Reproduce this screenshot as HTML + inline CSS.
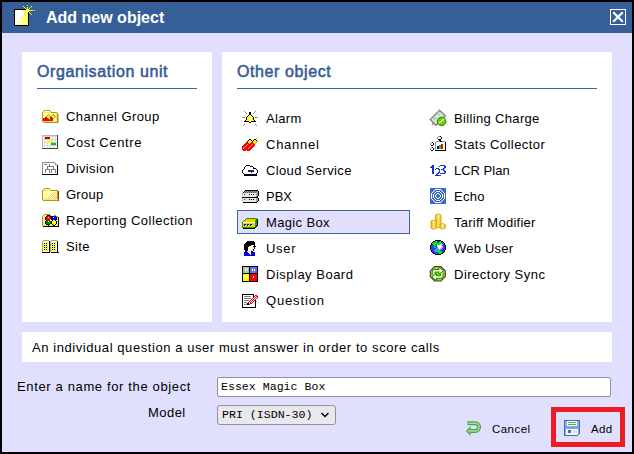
<!DOCTYPE html>
<html><head><meta charset="utf-8">
<style>
html,body{margin:0;padding:0;}
body{width:634px;height:454px;position:relative;overflow:hidden;background:#000;font-family:"Liberation Sans",sans-serif;}
.a{position:absolute;}
svg.a{display:block;}
#win{left:2px;top:2px;width:630px;height:450px;background:#E0E0FE;}
#title{left:2px;top:2px;width:630px;height:31px;background:#365F97;}
#ttext{left:46px;top:9px;font-weight:bold;font-size:16px;line-height:17px;color:#fff;white-space:nowrap;}
.panel{background:#fff;}
.hd{font-size:16px;line-height:17px;color:#355C95;-webkit-text-stroke:0.55px #355C95;letter-spacing:0.6px;white-space:nowrap;}
.ln{height:1px;background:#3D63A0;}
.sel{border:1px solid #3D63A0;background:#E0E0FE;}
.it{font-size:13px;line-height:15px;color:#000;white-space:nowrap;letter-spacing:0.4px;word-spacing:0;}
.btn{font-size:11.5px;line-height:15px;color:#000;white-space:nowrap;}
.inp{border:1px solid #8F8F9D;border-radius:2px;background:#fff;}
.selb{border:1px solid #8F8F9D;border-radius:3px;background:#E9E9ED;}
.mono{font-family:"Liberation Mono",monospace;font-size:11.6px;line-height:15px;white-space:nowrap;color:#000;}
</style></head>
<body>
<div id="win" class="a"></div>
<div id="title" class="a"></div>
<svg class="a" style="left:0;top:0" width="40" height="30" viewBox="0 0 40 30" shape-rendering="crispEdges"><rect x="14" y="9" width="15" height="17" fill="#000"/><rect x="15" y="10" width="13" height="15" fill="#fff"/><rect x="25" y="23" width="1" height="1" fill="#FFFF00"/><rect x="34" y="10" width="1" height="1" fill="#FFFF00"/><rect x="20" y="20" width="1" height="1" fill="#FFFF00"/><rect x="27" y="13" width="1" height="1" fill="#FFFF00"/><rect x="26" y="14" width="1" height="1" fill="#FFFF00"/><rect x="20" y="22" width="1" height="1" fill="#FFFF00"/><rect x="24" y="10" width="1" height="1" fill="#FFFF00"/><rect x="26" y="16" width="1" height="1" fill="#FFFF00"/><rect x="16" y="24" width="1" height="1" fill="#FFFF00"/><rect x="27" y="8" width="1" height="1" fill="#FFFF00"/><rect x="20" y="24" width="1" height="1" fill="#FFFF00"/><rect x="30" y="13" width="1" height="1" fill="#FFFF00"/><rect x="26" y="9" width="1" height="1" fill="#FFFF00"/><rect x="26" y="18" width="1" height="1" fill="#FFFF00"/><rect x="28" y="9" width="1" height="1" fill="#FFFF00"/><rect x="24" y="14" width="1" height="1" fill="#FFFF00"/><rect x="26" y="11" width="1" height="1" fill="#FFFF00"/><rect x="25" y="13" width="1" height="1" fill="#FFFF00"/><rect x="26" y="20" width="1" height="1" fill="#FFFF00"/><rect x="31" y="10" width="1" height="1" fill="#FFFF00"/><rect x="23" y="6" width="1" height="1" fill="#FFFF00"/><rect x="22" y="16" width="1" height="1" fill="#FFFF00"/><rect x="23" y="15" width="1" height="1" fill="#FFFF00"/><rect x="28" y="11" width="1" height="1" fill="#FFFF00"/><rect x="27" y="15" width="1" height="1" fill="#FFFF00"/><rect x="24" y="7" width="1" height="1" fill="#FFFF00"/><rect x="24" y="16" width="1" height="1" fill="#FFFF00"/><rect x="25" y="15" width="1" height="1" fill="#FFFF00"/><rect x="22" y="18" width="1" height="1" fill="#FFFF00"/><rect x="23" y="17" width="1" height="1" fill="#FFFF00"/><rect x="27" y="17" width="1" height="1" fill="#FFFF00"/><rect x="25" y="8" width="1" height="1" fill="#FFFF00"/><rect x="24" y="18" width="1" height="1" fill="#FFFF00"/><rect x="25" y="17" width="1" height="1" fill="#FFFF00"/><rect x="29" y="8" width="1" height="1" fill="#FFFF00"/><rect x="31" y="14" width="1" height="1" fill="#FFFF00"/><rect x="23" y="10" width="1" height="1" fill="#FFFF00"/><rect x="22" y="20" width="1" height="1" fill="#FFFF00"/><rect x="23" y="19" width="1" height="1" fill="#FFFF00"/><rect x="27" y="10" width="1" height="1" fill="#FFFF00"/><rect x="27" y="19" width="1" height="1" fill="#FFFF00"/><rect x="25" y="10" width="1" height="1" fill="#FFFF00"/><rect x="25" y="19" width="1" height="1" fill="#FFFF00"/><rect x="29" y="10" width="1" height="1" fill="#FFFF00"/><rect x="23" y="21" width="1" height="1" fill="#FFFF00"/><rect x="27" y="12" width="1" height="1" fill="#FFFF00"/><rect x="27" y="21" width="1" height="1" fill="#FFFF00"/><rect x="25" y="12" width="1" height="1" fill="#FFFF00"/><rect x="25" y="21" width="1" height="1" fill="#FFFF00"/><rect x="29" y="12" width="1" height="1" fill="#FFFF00"/><rect x="26" y="22" width="1" height="1" fill="#FFFF00"/><rect x="20" y="18" width="1" height="1" fill="#FFFF00"/><rect x="21" y="17" width="1" height="1" fill="#FFFF00"/><rect x="23" y="23" width="1" height="1" fill="#FFFF00"/><rect x="27" y="5" width="1" height="1" fill="#FFFF00"/><rect x="27" y="14" width="1" height="1" fill="#FFFF00"/><rect x="30" y="10" width="1" height="1" fill="#FFFF00"/><rect x="27" y="23" width="1" height="1" fill="#FFFF00"/><rect x="26" y="24" width="1" height="1" fill="#FFFF00"/><rect x="18" y="20" width="1" height="1" fill="#FFFF00"/><rect x="27" y="7" width="1" height="1" fill="#FFFF00"/><rect x="27" y="16" width="1" height="1" fill="#FFFF00"/><rect x="24" y="20" width="1" height="1" fill="#FFFF00"/><rect x="18" y="22" width="1" height="1" fill="#FFFF00"/><rect x="21" y="21" width="1" height="1" fill="#FFFF00"/><rect x="27" y="9" width="1" height="1" fill="#FFFF00"/><rect x="22" y="22" width="1" height="1" fill="#FFFF00"/><rect x="27" y="18" width="1" height="1" fill="#FFFF00"/><rect x="24" y="13" width="1" height="1" fill="#FFFF00"/><rect x="26" y="10" width="1" height="1" fill="#FFFF00"/><rect x="31" y="6" width="1" height="1" fill="#FFFF00"/><rect x="24" y="22" width="1" height="1" fill="#FFFF00"/><rect x="18" y="24" width="1" height="1" fill="#FFFF00"/><rect x="27" y="11" width="1" height="1" fill="#FFFF00"/><rect x="28" y="10" width="1" height="1" fill="#FFFF00"/><rect x="22" y="24" width="1" height="1" fill="#FFFF00"/><rect x="30" y="7" width="1" height="1" fill="#FFFF00"/><rect x="32" y="10" width="1" height="1" fill="#FFFF00"/><rect x="26" y="12" width="1" height="1" fill="#FFFF00"/><rect x="24" y="24" width="1" height="1" fill="#FFFF00"/><rect x="26" y="9" width="3" height="3" fill="#FFFF60"/><rect x="27" y="10" width="1" height="1" fill="#FFFFE0"/></svg>
<div id="ttext" class="a">Add new object</div>
<svg class="a" style="left:610px;top:9px" width="16" height="16" viewBox="0 0 16 16" shape-rendering="crispEdges"><rect x="0" y="0" width="16" height="16" fill="#fff"/><rect x="1" y="1" width="14" height="14" fill="#365F97"/><path d="M3.2 3.2L12.8 12.8M12.8 3.2L3.2 12.8" stroke="#fff" stroke-width="2.3" shape-rendering="geometricPrecision"/></svg>
<div class="a panel" style="left:22px;top:52px;width:190px;height:270px"></div>
<div class="a panel" style="left:222px;top:52px;width:390px;height:270px"></div>
<div class="a hd" style="left:37px;top:63px">Organisation unit</div>
<div class="a ln" style="left:37px;top:88px;width:160px"></div>
<div class="a hd" style="left:237px;top:63px">Other object</div>
<div class="a ln" style="left:237px;top:88px;width:360px"></div>
<div class="a sel" style="left:237px;top:210px;width:171px;height:22px"></div>
<svg class="a" style="left:41px;top:108px" width="18" height="18" viewBox="0 0 18 18" shape-rendering="crispEdges"><rect x="3" y="2" width="6" height="1" fill="#A4A000"/><rect x="2" y="3" width="1" height="1" fill="#A4A000"/><rect x="3" y="3" width="6" height="1" fill="#FFFFFF"/><rect x="9" y="3" width="1" height="1" fill="#A4A000"/><rect x="1" y="4" width="1" height="1" fill="#A4A000"/><rect x="2" y="4" width="8" height="1" fill="#FFD898"/><rect x="10" y="4" width="6" height="1" fill="#A4A000"/><rect x="1" y="5" width="1" height="1" fill="#A4A000"/><rect x="2" y="5" width="13" height="1" fill="#FFFFA8"/><rect x="15" y="5" width="1" height="1" fill="#FFD898"/><rect x="16" y="5" width="1" height="1" fill="#A4A000"/><rect x="1" y="6" width="1" height="1" fill="#A4A000"/><rect x="2" y="6" width="5" height="1" fill="#FFFFA8"/><rect x="7" y="6" width="1" height="1" fill="#A4A000"/><rect x="8" y="6" width="4" height="1" fill="#FFFFA8"/><rect x="12" y="6" width="1" height="1" fill="#A4A000"/><rect x="13" y="6" width="2" height="1" fill="#FFFFA8"/><rect x="15" y="6" width="1" height="1" fill="#FFD898"/><rect x="16" y="6" width="1" height="1" fill="#A4A000"/><rect x="17" y="6" width="1" height="1" fill="#C8C880"/><rect x="1" y="7" width="1" height="1" fill="#A4A000"/><rect x="2" y="7" width="4" height="1" fill="#FFFFA8"/><rect x="6" y="7" width="1" height="1" fill="#A4A000"/><rect x="7" y="7" width="1" height="1" fill="#FFFF00"/><rect x="8" y="7" width="1" height="1" fill="#A4A000"/><rect x="9" y="7" width="2" height="1" fill="#FFFFA8"/><rect x="11" y="7" width="1" height="1" fill="#A4A000"/><rect x="12" y="7" width="1" height="1" fill="#FFFF00"/><rect x="13" y="7" width="1" height="1" fill="#A4A000"/><rect x="14" y="7" width="1" height="1" fill="#FFFFA8"/><rect x="15" y="7" width="1" height="1" fill="#FFD898"/><rect x="16" y="7" width="1" height="1" fill="#A4A000"/><rect x="17" y="7" width="1" height="1" fill="#C8C880"/><rect x="1" y="8" width="1" height="1" fill="#A4A000"/><rect x="2" y="8" width="3" height="1" fill="#FFFFA8"/><rect x="5" y="8" width="1" height="1" fill="#A4A000"/><rect x="6" y="8" width="3" height="1" fill="#FFFF00"/><rect x="9" y="8" width="2" height="1" fill="#A4A000"/><rect x="11" y="8" width="3" height="1" fill="#FFFF00"/><rect x="14" y="8" width="1" height="1" fill="#A4A000"/><rect x="15" y="8" width="1" height="1" fill="#FFD898"/><rect x="16" y="8" width="1" height="1" fill="#A4A000"/><rect x="17" y="8" width="1" height="1" fill="#C8C880"/><rect x="1" y="9" width="1" height="1" fill="#A4A000"/><rect x="2" y="9" width="2" height="1" fill="#FFFFA8"/><rect x="4" y="9" width="2" height="1" fill="#FF0000"/><rect x="6" y="9" width="3" height="1" fill="#FFFF00"/><rect x="9" y="9" width="2" height="1" fill="#FF0000"/><rect x="11" y="9" width="2" height="1" fill="#FFFF00"/><rect x="13" y="9" width="1" height="1" fill="#A4A000"/><rect x="14" y="9" width="1" height="1" fill="#FFFFA8"/><rect x="15" y="9" width="1" height="1" fill="#FFD898"/><rect x="16" y="9" width="1" height="1" fill="#A4A000"/><rect x="17" y="9" width="1" height="1" fill="#C8C880"/><rect x="1" y="10" width="1" height="1" fill="#A4A000"/><rect x="2" y="10" width="5" height="1" fill="#FF0000"/><rect x="7" y="10" width="1" height="1" fill="#A4A000"/><rect x="8" y="10" width="1" height="1" fill="#FFFF00"/><rect x="9" y="10" width="3" height="1" fill="#FF0000"/><rect x="12" y="10" width="1" height="1" fill="#A4A000"/><rect x="13" y="10" width="2" height="1" fill="#FFFFA8"/><rect x="15" y="10" width="1" height="1" fill="#FFD898"/><rect x="16" y="10" width="1" height="1" fill="#A4A000"/><rect x="17" y="10" width="1" height="1" fill="#C8C880"/><rect x="1" y="11" width="1" height="1" fill="#A4A000"/><rect x="2" y="11" width="6" height="1" fill="#FF0000"/><rect x="8" y="11" width="1" height="1" fill="#A4A000"/><rect x="9" y="11" width="3" height="1" fill="#FF0000"/><rect x="12" y="11" width="3" height="1" fill="#FFFFA8"/><rect x="15" y="11" width="1" height="1" fill="#FFD898"/><rect x="16" y="11" width="1" height="1" fill="#A4A000"/><rect x="17" y="11" width="1" height="1" fill="#C8C880"/><rect x="1" y="12" width="1" height="1" fill="#A4A000"/><rect x="2" y="12" width="10" height="1" fill="#FF0000"/><rect x="12" y="12" width="3" height="1" fill="#FFFFA8"/><rect x="15" y="12" width="1" height="1" fill="#FFD898"/><rect x="16" y="12" width="1" height="1" fill="#A4A000"/><rect x="17" y="12" width="1" height="1" fill="#C8C880"/><rect x="1" y="13" width="1" height="1" fill="#A4A000"/><rect x="2" y="13" width="14" height="1" fill="#FFD898"/><rect x="16" y="13" width="1" height="1" fill="#A4A000"/><rect x="17" y="13" width="1" height="1" fill="#C8C880"/><rect x="2" y="14" width="15" height="1" fill="#A4A000"/><rect x="17" y="14" width="1" height="1" fill="#C8C880"/></svg>
<div class="a it" style="left:66px;top:109px;letter-spacing:0.42px">Channel Group</div>
<svg class="a" style="left:41px;top:133px" width="18" height="18" viewBox="0 0 18 18" shape-rendering="crispEdges"><rect x="1" y="2" width="15" height="1" fill="#B8B8B8"/><rect x="16" y="2" width="1" height="1" fill="#404040"/><rect x="1" y="3" width="1" height="1" fill="#B8B8B8"/><rect x="2" y="3" width="14" height="1" fill="#D8D8D8"/><rect x="16" y="3" width="1" height="1" fill="#404040"/><rect x="1" y="4" width="1" height="1" fill="#B8B8B8"/><rect x="2" y="4" width="1" height="1" fill="#FFFFFF"/><rect x="3" y="4" width="1" height="1" fill="#D8D8D8"/><rect x="4" y="4" width="5" height="1" fill="#C00000"/><rect x="9" y="4" width="2" height="1" fill="#FFFFFF"/><rect x="11" y="4" width="1" height="1" fill="#D8D8D8"/><rect x="12" y="4" width="2" height="1" fill="#FFFFFF"/><rect x="14" y="4" width="1" height="1" fill="#D8D8D8"/><rect x="15" y="4" width="1" height="1" fill="#FFFFFF"/><rect x="16" y="4" width="1" height="1" fill="#404040"/><rect x="1" y="5" width="1" height="1" fill="#B8B8B8"/><rect x="2" y="5" width="1" height="1" fill="#FFFFFF"/><rect x="3" y="5" width="1" height="1" fill="#D8D8D8"/><rect x="4" y="5" width="5" height="1" fill="#C00000"/><rect x="9" y="5" width="2" height="1" fill="#FFFFFF"/><rect x="11" y="5" width="1" height="1" fill="#D8D8D8"/><rect x="12" y="5" width="2" height="1" fill="#FFFFFF"/><rect x="14" y="5" width="1" height="1" fill="#D8D8D8"/><rect x="15" y="5" width="1" height="1" fill="#FFFFFF"/><rect x="16" y="5" width="1" height="1" fill="#404040"/><rect x="1" y="6" width="1" height="1" fill="#B8B8B8"/><rect x="2" y="6" width="14" height="1" fill="#D8D8D8"/><rect x="16" y="6" width="1" height="1" fill="#404040"/><rect x="1" y="7" width="1" height="1" fill="#B8B8B8"/><rect x="2" y="7" width="1" height="1" fill="#FFFFFF"/><rect x="3" y="7" width="1" height="1" fill="#D8D8D8"/><rect x="4" y="7" width="2" height="1" fill="#FFFFFF"/><rect x="6" y="7" width="5" height="1" fill="#FFFF00"/><rect x="11" y="7" width="1" height="1" fill="#D8D8D8"/><rect x="12" y="7" width="2" height="1" fill="#FFFFFF"/><rect x="14" y="7" width="1" height="1" fill="#D8D8D8"/><rect x="15" y="7" width="1" height="1" fill="#FFFFFF"/><rect x="16" y="7" width="1" height="1" fill="#404040"/><rect x="1" y="8" width="1" height="1" fill="#B8B8B8"/><rect x="2" y="8" width="1" height="1" fill="#FFFFFF"/><rect x="3" y="8" width="1" height="1" fill="#D8D8D8"/><rect x="4" y="8" width="2" height="1" fill="#FFFFFF"/><rect x="6" y="8" width="5" height="1" fill="#FFFF00"/><rect x="11" y="8" width="1" height="1" fill="#D8D8D8"/><rect x="12" y="8" width="2" height="1" fill="#FFFFFF"/><rect x="14" y="8" width="1" height="1" fill="#D8D8D8"/><rect x="15" y="8" width="1" height="1" fill="#FFFFFF"/><rect x="16" y="8" width="1" height="1" fill="#404040"/><rect x="1" y="9" width="1" height="1" fill="#B8B8B8"/><rect x="2" y="9" width="14" height="1" fill="#D8D8D8"/><rect x="16" y="9" width="1" height="1" fill="#404040"/><rect x="1" y="10" width="1" height="1" fill="#B8B8B8"/><rect x="2" y="10" width="1" height="1" fill="#FFFFFF"/><rect x="3" y="10" width="1" height="1" fill="#D8D8D8"/><rect x="4" y="10" width="2" height="1" fill="#FFFFFF"/><rect x="6" y="10" width="1" height="1" fill="#D8D8D8"/><rect x="7" y="10" width="3" height="1" fill="#FFFFFF"/><rect x="10" y="10" width="5" height="1" fill="#00C000"/><rect x="15" y="10" width="1" height="1" fill="#FFFFFF"/><rect x="16" y="10" width="1" height="1" fill="#404040"/><rect x="1" y="11" width="1" height="1" fill="#B8B8B8"/><rect x="2" y="11" width="1" height="1" fill="#FFFFFF"/><rect x="3" y="11" width="1" height="1" fill="#D8D8D8"/><rect x="4" y="11" width="2" height="1" fill="#FFFFFF"/><rect x="6" y="11" width="1" height="1" fill="#D8D8D8"/><rect x="7" y="11" width="3" height="1" fill="#FFFFFF"/><rect x="10" y="11" width="5" height="1" fill="#00C000"/><rect x="15" y="11" width="1" height="1" fill="#FFFFFF"/><rect x="16" y="11" width="1" height="1" fill="#404040"/><rect x="1" y="12" width="1" height="1" fill="#B8B8B8"/><rect x="2" y="12" width="14" height="1" fill="#D8D8D8"/><rect x="16" y="12" width="1" height="1" fill="#404040"/><rect x="1" y="13" width="1" height="1" fill="#B8B8B8"/><rect x="2" y="13" width="1" height="1" fill="#FFFFFF"/><rect x="3" y="13" width="1" height="1" fill="#D8D8D8"/><rect x="4" y="13" width="2" height="1" fill="#FFFFFF"/><rect x="6" y="13" width="1" height="1" fill="#D8D8D8"/><rect x="7" y="13" width="2" height="1" fill="#FFFFFF"/><rect x="9" y="13" width="1" height="1" fill="#D8D8D8"/><rect x="10" y="13" width="2" height="1" fill="#FFFFFF"/><rect x="12" y="13" width="1" height="1" fill="#D8D8D8"/><rect x="13" y="13" width="3" height="1" fill="#FFFFFF"/><rect x="16" y="13" width="1" height="1" fill="#404040"/><rect x="1" y="14" width="1" height="1" fill="#B8B8B8"/><rect x="2" y="14" width="1" height="1" fill="#FFFFFF"/><rect x="3" y="14" width="1" height="1" fill="#D8D8D8"/><rect x="4" y="14" width="2" height="1" fill="#FFFFFF"/><rect x="6" y="14" width="1" height="1" fill="#D8D8D8"/><rect x="7" y="14" width="2" height="1" fill="#FFFFFF"/><rect x="9" y="14" width="1" height="1" fill="#D8D8D8"/><rect x="10" y="14" width="2" height="1" fill="#FFFFFF"/><rect x="12" y="14" width="1" height="1" fill="#D8D8D8"/><rect x="13" y="14" width="3" height="1" fill="#FFFFFF"/><rect x="16" y="14" width="1" height="1" fill="#404040"/><rect x="1" y="15" width="16" height="1" fill="#404040"/></svg>
<div class="a it" style="left:66px;top:135px;letter-spacing:0.6px">Cost Centre</div>
<svg class="a" style="left:41px;top:159px" width="18" height="18" viewBox="0 0 18 18" shape-rendering="crispEdges"><rect x="1" y="3" width="13" height="1" fill="#888888"/><rect x="1" y="4" width="1" height="1" fill="#888888"/><rect x="2" y="4" width="12" height="1" fill="#FFFFFF"/><rect x="14" y="4" width="1" height="1" fill="#888888"/><rect x="1" y="5" width="1" height="1" fill="#888888"/><rect x="2" y="5" width="1" height="1" fill="#FFFFFF"/><rect x="3" y="5" width="3" height="1" fill="#808080"/><rect x="6" y="5" width="2" height="1" fill="#FFFFFF"/><rect x="8" y="5" width="1" height="1" fill="#808080"/><rect x="9" y="5" width="5" height="1" fill="#FFFFFF"/><rect x="14" y="5" width="2" height="1" fill="#888888"/><rect x="1" y="6" width="1" height="1" fill="#888888"/><rect x="2" y="6" width="6" height="1" fill="#FFFFFF"/><rect x="8" y="6" width="1" height="1" fill="#808080"/><rect x="9" y="6" width="7" height="1" fill="#FFFFFF"/><rect x="16" y="6" width="1" height="1" fill="#000000"/><rect x="1" y="7" width="1" height="1" fill="#888888"/><rect x="2" y="7" width="4" height="1" fill="#FFFFFF"/><rect x="6" y="7" width="7" height="1" fill="#808080"/><rect x="13" y="7" width="3" height="1" fill="#FFFFFF"/><rect x="16" y="7" width="1" height="1" fill="#000000"/><rect x="1" y="8" width="1" height="1" fill="#888888"/><rect x="2" y="8" width="4" height="1" fill="#FFFFFF"/><rect x="6" y="8" width="1" height="1" fill="#808080"/><rect x="7" y="8" width="5" height="1" fill="#FFFFFF"/><rect x="12" y="8" width="1" height="1" fill="#808080"/><rect x="13" y="8" width="3" height="1" fill="#FFFFFF"/><rect x="16" y="8" width="1" height="1" fill="#000000"/><rect x="1" y="9" width="1" height="1" fill="#888888"/><rect x="2" y="9" width="4" height="1" fill="#FFFFFF"/><rect x="6" y="9" width="1" height="1" fill="#808080"/><rect x="7" y="9" width="5" height="1" fill="#FFFFFF"/><rect x="12" y="9" width="1" height="1" fill="#808080"/><rect x="13" y="9" width="3" height="1" fill="#FFFFFF"/><rect x="16" y="9" width="1" height="1" fill="#000000"/><rect x="1" y="10" width="1" height="1" fill="#888888"/><rect x="2" y="10" width="2" height="1" fill="#FFFFFF"/><rect x="4" y="10" width="5" height="1" fill="#808080"/><rect x="9" y="10" width="1" height="1" fill="#FFFFFF"/><rect x="10" y="10" width="5" height="1" fill="#808080"/><rect x="15" y="10" width="1" height="1" fill="#FFFFFF"/><rect x="16" y="10" width="1" height="1" fill="#000000"/><rect x="1" y="11" width="1" height="1" fill="#888888"/><rect x="2" y="11" width="2" height="1" fill="#FFFFFF"/><rect x="4" y="11" width="1" height="1" fill="#808080"/><rect x="5" y="11" width="3" height="1" fill="#FFFFFF"/><rect x="8" y="11" width="1" height="1" fill="#808080"/><rect x="9" y="11" width="1" height="1" fill="#FFFFFF"/><rect x="10" y="11" width="1" height="1" fill="#808080"/><rect x="11" y="11" width="3" height="1" fill="#FFFFFF"/><rect x="14" y="11" width="1" height="1" fill="#808080"/><rect x="15" y="11" width="1" height="1" fill="#FFFFFF"/><rect x="16" y="11" width="1" height="1" fill="#000000"/><rect x="1" y="12" width="1" height="1" fill="#888888"/><rect x="2" y="12" width="2" height="1" fill="#FFFFFF"/><rect x="4" y="12" width="1" height="1" fill="#808080"/><rect x="5" y="12" width="3" height="1" fill="#FFFFFF"/><rect x="8" y="12" width="1" height="1" fill="#808080"/><rect x="9" y="12" width="1" height="1" fill="#FFFFFF"/><rect x="10" y="12" width="1" height="1" fill="#808080"/><rect x="11" y="12" width="3" height="1" fill="#FFFFFF"/><rect x="14" y="12" width="1" height="1" fill="#808080"/><rect x="15" y="12" width="1" height="1" fill="#FFFFFF"/><rect x="16" y="12" width="1" height="1" fill="#000000"/><rect x="1" y="13" width="1" height="1" fill="#888888"/><rect x="2" y="13" width="2" height="1" fill="#FFFFFF"/><rect x="4" y="13" width="1" height="1" fill="#808080"/><rect x="5" y="13" width="3" height="1" fill="#FFFFFF"/><rect x="8" y="13" width="1" height="1" fill="#808080"/><rect x="9" y="13" width="1" height="1" fill="#FFFFFF"/><rect x="10" y="13" width="1" height="1" fill="#808080"/><rect x="11" y="13" width="3" height="1" fill="#FFFFFF"/><rect x="14" y="13" width="1" height="1" fill="#808080"/><rect x="15" y="13" width="1" height="1" fill="#FFFFFF"/><rect x="16" y="13" width="1" height="1" fill="#000000"/><rect x="1" y="14" width="1" height="1" fill="#888888"/><rect x="2" y="14" width="14" height="1" fill="#FFFFFF"/><rect x="16" y="14" width="1" height="1" fill="#000000"/><rect x="1" y="15" width="16" height="1" fill="#000000"/></svg>
<div class="a it" style="left:66px;top:161px;letter-spacing:0.36px">Division</div>
<svg class="a" style="left:41px;top:185px" width="18" height="18" viewBox="0 0 18 18" shape-rendering="crispEdges"><rect x="3" y="3" width="6" height="1" fill="#A4A000"/><rect x="2" y="4" width="1" height="1" fill="#A4A000"/><rect x="3" y="4" width="6" height="1" fill="#FFFFFF"/><rect x="9" y="4" width="1" height="1" fill="#A4A000"/><rect x="1" y="5" width="1" height="1" fill="#A4A000"/><rect x="2" y="5" width="8" height="1" fill="#FFD898"/><rect x="10" y="5" width="7" height="1" fill="#A4A000"/><rect x="1" y="6" width="1" height="1" fill="#A4A000"/><rect x="2" y="6" width="14" height="1" fill="#FFFFA0"/><rect x="16" y="6" width="1" height="1" fill="#A4A000"/><rect x="17" y="6" width="1" height="1" fill="#606000"/><rect x="1" y="7" width="1" height="1" fill="#A4A000"/><rect x="2" y="7" width="10" height="1" fill="#FFFFA0"/><rect x="12" y="7" width="1" height="1" fill="#FFC8A0"/><rect x="13" y="7" width="1" height="1" fill="#FFFFA0"/><rect x="14" y="7" width="1" height="1" fill="#FFC8A0"/><rect x="15" y="7" width="1" height="1" fill="#FFFFA0"/><rect x="16" y="7" width="1" height="1" fill="#A4A000"/><rect x="17" y="7" width="1" height="1" fill="#606000"/><rect x="1" y="8" width="1" height="1" fill="#A4A000"/><rect x="2" y="8" width="9" height="1" fill="#FFFFA0"/><rect x="11" y="8" width="1" height="1" fill="#FFC8A0"/><rect x="12" y="8" width="1" height="1" fill="#FFFFA0"/><rect x="13" y="8" width="1" height="1" fill="#FFC8A0"/><rect x="14" y="8" width="1" height="1" fill="#FFFFA0"/><rect x="15" y="8" width="1" height="1" fill="#FFC8A0"/><rect x="16" y="8" width="1" height="1" fill="#A4A000"/><rect x="17" y="8" width="1" height="1" fill="#606000"/><rect x="1" y="9" width="1" height="1" fill="#A4A000"/><rect x="2" y="9" width="8" height="1" fill="#FFFFA0"/><rect x="10" y="9" width="1" height="1" fill="#FFC8A0"/><rect x="11" y="9" width="1" height="1" fill="#FFFFA0"/><rect x="12" y="9" width="1" height="1" fill="#FFC8A0"/><rect x="13" y="9" width="1" height="1" fill="#FFFFA0"/><rect x="14" y="9" width="1" height="1" fill="#FFC8A0"/><rect x="15" y="9" width="1" height="1" fill="#FFFFA0"/><rect x="16" y="9" width="1" height="1" fill="#A4A000"/><rect x="17" y="9" width="1" height="1" fill="#606000"/><rect x="1" y="10" width="1" height="1" fill="#A4A000"/><rect x="2" y="10" width="7" height="1" fill="#FFFFA0"/><rect x="9" y="10" width="1" height="1" fill="#FFC8A0"/><rect x="10" y="10" width="1" height="1" fill="#FFFFA0"/><rect x="11" y="10" width="1" height="1" fill="#FFC8A0"/><rect x="12" y="10" width="1" height="1" fill="#FFFFA0"/><rect x="13" y="10" width="1" height="1" fill="#FFC8A0"/><rect x="14" y="10" width="1" height="1" fill="#FFFFA0"/><rect x="15" y="10" width="1" height="1" fill="#FFC8A0"/><rect x="16" y="10" width="1" height="1" fill="#A4A000"/><rect x="17" y="10" width="1" height="1" fill="#606000"/><rect x="1" y="11" width="1" height="1" fill="#A4A000"/><rect x="2" y="11" width="6" height="1" fill="#FFFFA0"/><rect x="8" y="11" width="1" height="1" fill="#FFC8A0"/><rect x="9" y="11" width="1" height="1" fill="#FFFFA0"/><rect x="10" y="11" width="1" height="1" fill="#FFC8A0"/><rect x="11" y="11" width="1" height="1" fill="#FFFFA0"/><rect x="12" y="11" width="1" height="1" fill="#FFC8A0"/><rect x="13" y="11" width="1" height="1" fill="#FFFFA0"/><rect x="14" y="11" width="1" height="1" fill="#FFC8A0"/><rect x="15" y="11" width="1" height="1" fill="#FFFFA0"/><rect x="16" y="11" width="1" height="1" fill="#A4A000"/><rect x="17" y="11" width="1" height="1" fill="#606000"/><rect x="1" y="12" width="1" height="1" fill="#A4A000"/><rect x="2" y="12" width="5" height="1" fill="#FFFFA0"/><rect x="7" y="12" width="1" height="1" fill="#FFC8A0"/><rect x="8" y="12" width="1" height="1" fill="#FFFFA0"/><rect x="9" y="12" width="1" height="1" fill="#FFC8A0"/><rect x="10" y="12" width="1" height="1" fill="#FFFFA0"/><rect x="11" y="12" width="1" height="1" fill="#FFC8A0"/><rect x="12" y="12" width="1" height="1" fill="#FFFFA0"/><rect x="13" y="12" width="3" height="1" fill="#FFC8A0"/><rect x="16" y="12" width="1" height="1" fill="#A4A000"/><rect x="17" y="12" width="1" height="1" fill="#606000"/><rect x="1" y="13" width="1" height="1" fill="#A4A000"/><rect x="2" y="13" width="1" height="1" fill="#FFFFA0"/><rect x="3" y="13" width="1" height="1" fill="#FFC8A0"/><rect x="4" y="13" width="1" height="1" fill="#FFFFA0"/><rect x="5" y="13" width="1" height="1" fill="#FFC8A0"/><rect x="6" y="13" width="1" height="1" fill="#FFFFA0"/><rect x="7" y="13" width="1" height="1" fill="#FFC8A0"/><rect x="8" y="13" width="1" height="1" fill="#FFFFA0"/><rect x="9" y="13" width="1" height="1" fill="#FFC8A0"/><rect x="10" y="13" width="1" height="1" fill="#FFFFA0"/><rect x="11" y="13" width="1" height="1" fill="#FFC8A0"/><rect x="12" y="13" width="1" height="1" fill="#FFFFA0"/><rect x="13" y="13" width="3" height="1" fill="#FFC8A0"/><rect x="16" y="13" width="1" height="1" fill="#A4A000"/><rect x="17" y="13" width="1" height="1" fill="#606000"/><rect x="1" y="14" width="1" height="1" fill="#A4A000"/><rect x="2" y="14" width="15" height="1" fill="#FFD898"/><rect x="17" y="14" width="1" height="1" fill="#606000"/><rect x="2" y="15" width="15" height="1" fill="#A4A000"/><rect x="17" y="15" width="1" height="1" fill="#606000"/></svg>
<div class="a it" style="left:66px;top:187px;letter-spacing:0.25px">Group</div>
<svg class="a" style="left:41px;top:211px" width="18" height="18" viewBox="0 0 18 18" shape-rendering="crispEdges"><rect x="3" y="3" width="6" height="1" fill="#A4A000"/><rect x="2" y="4" width="1" height="1" fill="#A4A000"/><rect x="3" y="4" width="3" height="1" fill="#FFF0D0"/><rect x="6" y="4" width="3" height="1" fill="#000000"/><rect x="9" y="4" width="1" height="1" fill="#A4A000"/><rect x="13" y="4" width="2" height="1" fill="#A4A000"/><rect x="1" y="5" width="1" height="1" fill="#A4A000"/><rect x="2" y="5" width="1" height="1" fill="#FFD898"/><rect x="3" y="5" width="2" height="1" fill="#FFF0D0"/><rect x="5" y="5" width="1" height="1" fill="#000000"/><rect x="6" y="5" width="3" height="1" fill="#FF0000"/><rect x="9" y="5" width="2" height="1" fill="#000000"/><rect x="11" y="5" width="3" height="1" fill="#0000FF"/><rect x="14" y="5" width="1" height="1" fill="#000000"/><rect x="15" y="5" width="2" height="1" fill="#A4A000"/><rect x="1" y="6" width="1" height="1" fill="#A4A000"/><rect x="2" y="6" width="1" height="1" fill="#FFD898"/><rect x="3" y="6" width="1" height="1" fill="#FFF0D0"/><rect x="4" y="6" width="1" height="1" fill="#000000"/><rect x="5" y="6" width="2" height="1" fill="#FF0000"/><rect x="7" y="6" width="1" height="1" fill="#FFFFFF"/><rect x="8" y="6" width="2" height="1" fill="#FF0000"/><rect x="10" y="6" width="1" height="1" fill="#000000"/><rect x="11" y="6" width="1" height="1" fill="#0000FF"/><rect x="12" y="6" width="1" height="1" fill="#FFFFFF"/><rect x="13" y="6" width="2" height="1" fill="#0000FF"/><rect x="15" y="6" width="1" height="1" fill="#000000"/><rect x="16" y="6" width="1" height="1" fill="#FFD898"/><rect x="17" y="6" width="1" height="1" fill="#000000"/><rect x="1" y="7" width="1" height="1" fill="#A4A000"/><rect x="2" y="7" width="1" height="1" fill="#FFD898"/><rect x="3" y="7" width="1" height="1" fill="#FFF0D0"/><rect x="4" y="7" width="1" height="1" fill="#000000"/><rect x="5" y="7" width="5" height="1" fill="#FF0000"/><rect x="10" y="7" width="1" height="1" fill="#000000"/><rect x="11" y="7" width="4" height="1" fill="#0000FF"/><rect x="15" y="7" width="1" height="1" fill="#000000"/><rect x="16" y="7" width="1" height="1" fill="#FFD898"/><rect x="17" y="7" width="1" height="1" fill="#000000"/><rect x="1" y="8" width="1" height="1" fill="#A4A000"/><rect x="2" y="8" width="2" height="1" fill="#FFD898"/><rect x="4" y="8" width="1" height="1" fill="#000000"/><rect x="5" y="8" width="4" height="1" fill="#FF0000"/><rect x="9" y="8" width="1" height="1" fill="#FFF0D0"/><rect x="10" y="8" width="1" height="1" fill="#000000"/><rect x="11" y="8" width="4" height="1" fill="#0000FF"/><rect x="15" y="8" width="1" height="1" fill="#000000"/><rect x="16" y="8" width="1" height="1" fill="#FFD898"/><rect x="17" y="8" width="1" height="1" fill="#000000"/><rect x="1" y="9" width="1" height="1" fill="#A4A000"/><rect x="2" y="9" width="1" height="1" fill="#FFD898"/><rect x="3" y="9" width="2" height="1" fill="#FFF0D0"/><rect x="5" y="9" width="1" height="1" fill="#000000"/><rect x="6" y="9" width="3" height="1" fill="#008000"/><rect x="9" y="9" width="2" height="1" fill="#FFF0D0"/><rect x="11" y="9" width="1" height="1" fill="#000000"/><rect x="12" y="9" width="2" height="1" fill="#FFFF00"/><rect x="14" y="9" width="1" height="1" fill="#000000"/><rect x="15" y="9" width="1" height="1" fill="#FFF0D0"/><rect x="16" y="9" width="1" height="1" fill="#FFD898"/><rect x="17" y="9" width="1" height="1" fill="#000000"/><rect x="1" y="10" width="1" height="1" fill="#A4A000"/><rect x="2" y="10" width="1" height="1" fill="#FFD898"/><rect x="3" y="10" width="1" height="1" fill="#FFF0D0"/><rect x="4" y="10" width="1" height="1" fill="#000000"/><rect x="5" y="10" width="2" height="1" fill="#008000"/><rect x="7" y="10" width="1" height="1" fill="#FFFFFF"/><rect x="8" y="10" width="2" height="1" fill="#008000"/><rect x="10" y="10" width="1" height="1" fill="#000000"/><rect x="11" y="10" width="2" height="1" fill="#FFFF00"/><rect x="13" y="10" width="1" height="1" fill="#FFFFFF"/><rect x="14" y="10" width="1" height="1" fill="#FFFF00"/><rect x="15" y="10" width="1" height="1" fill="#000000"/><rect x="16" y="10" width="1" height="1" fill="#FFD898"/><rect x="17" y="10" width="1" height="1" fill="#000000"/><rect x="1" y="11" width="1" height="1" fill="#A4A000"/><rect x="2" y="11" width="1" height="1" fill="#FFD898"/><rect x="3" y="11" width="1" height="1" fill="#FFF0D0"/><rect x="4" y="11" width="1" height="1" fill="#000000"/><rect x="5" y="11" width="5" height="1" fill="#008000"/><rect x="10" y="11" width="1" height="1" fill="#000000"/><rect x="11" y="11" width="4" height="1" fill="#FFFF00"/><rect x="15" y="11" width="1" height="1" fill="#000000"/><rect x="16" y="11" width="1" height="1" fill="#FFD898"/><rect x="17" y="11" width="1" height="1" fill="#000000"/><rect x="1" y="12" width="1" height="1" fill="#A4A000"/><rect x="2" y="12" width="1" height="1" fill="#FFD898"/><rect x="3" y="12" width="1" height="1" fill="#FFF0D0"/><rect x="4" y="12" width="1" height="1" fill="#000000"/><rect x="5" y="12" width="5" height="1" fill="#008000"/><rect x="10" y="12" width="1" height="1" fill="#000000"/><rect x="11" y="12" width="4" height="1" fill="#FFFF00"/><rect x="15" y="12" width="1" height="1" fill="#000000"/><rect x="16" y="12" width="1" height="1" fill="#FFD898"/><rect x="17" y="12" width="1" height="1" fill="#000000"/><rect x="1" y="13" width="1" height="1" fill="#A4A000"/><rect x="2" y="13" width="2" height="1" fill="#FFD898"/><rect x="4" y="13" width="1" height="1" fill="#FFF0D0"/><rect x="5" y="13" width="2" height="1" fill="#000000"/><rect x="7" y="13" width="1" height="1" fill="#008000"/><rect x="8" y="13" width="1" height="1" fill="#000000"/><rect x="9" y="13" width="1" height="1" fill="#FFF0D0"/><rect x="10" y="13" width="1" height="1" fill="#FFD898"/><rect x="11" y="13" width="1" height="1" fill="#000000"/><rect x="12" y="13" width="2" height="1" fill="#FFFF00"/><rect x="14" y="13" width="1" height="1" fill="#000000"/><rect x="15" y="13" width="2" height="1" fill="#FFD898"/><rect x="17" y="13" width="1" height="1" fill="#000000"/><rect x="1" y="14" width="1" height="1" fill="#A4A000"/><rect x="2" y="14" width="5" height="1" fill="#FFD898"/><rect x="7" y="14" width="1" height="1" fill="#000000"/><rect x="8" y="14" width="4" height="1" fill="#FFD898"/><rect x="12" y="14" width="2" height="1" fill="#000000"/><rect x="14" y="14" width="3" height="1" fill="#FFD898"/><rect x="17" y="14" width="1" height="1" fill="#000000"/><rect x="2" y="15" width="16" height="1" fill="#000000"/></svg>
<div class="a it" style="left:66px;top:213px;letter-spacing:0.5px">Reporting Collection</div>
<svg class="a" style="left:41px;top:237px" width="18" height="18" viewBox="0 0 18 18" shape-rendering="crispEdges"><rect x="2" y="3" width="6" height="1" fill="#A0A0A0"/><rect x="10" y="3" width="6" height="1" fill="#A0A0A0"/><rect x="1" y="4" width="1" height="1" fill="#A0A0A0"/><rect x="2" y="4" width="6" height="1" fill="#FFFFFF"/><rect x="8" y="4" width="1" height="1" fill="#000000"/><rect x="9" y="4" width="1" height="1" fill="#A0A0A0"/><rect x="10" y="4" width="6" height="1" fill="#FFFFFF"/><rect x="16" y="4" width="1" height="1" fill="#000000"/><rect x="1" y="5" width="1" height="1" fill="#A0A0A0"/><rect x="2" y="5" width="1" height="1" fill="#FFFF00"/><rect x="3" y="5" width="1" height="1" fill="#FFFFFF"/><rect x="4" y="5" width="1" height="1" fill="#FFFF00"/><rect x="5" y="5" width="1" height="1" fill="#FFFFFF"/><rect x="6" y="5" width="1" height="1" fill="#FFFF00"/><rect x="7" y="5" width="1" height="1" fill="#FFFFFF"/><rect x="8" y="5" width="1" height="1" fill="#000000"/><rect x="9" y="5" width="1" height="1" fill="#A0A0A0"/><rect x="10" y="5" width="1" height="1" fill="#FFFF00"/><rect x="11" y="5" width="1" height="1" fill="#FFFFFF"/><rect x="12" y="5" width="1" height="1" fill="#FFFF00"/><rect x="13" y="5" width="1" height="1" fill="#FFFFFF"/><rect x="14" y="5" width="1" height="1" fill="#FFFF00"/><rect x="15" y="5" width="1" height="1" fill="#FFFFFF"/><rect x="16" y="5" width="1" height="1" fill="#000000"/><rect x="1" y="6" width="1" height="1" fill="#A0A0A0"/><rect x="2" y="6" width="1" height="1" fill="#FFFF00"/><rect x="3" y="6" width="1" height="1" fill="#000000"/><rect x="4" y="6" width="1" height="1" fill="#FFFF00"/><rect x="5" y="6" width="1" height="1" fill="#000000"/><rect x="6" y="6" width="1" height="1" fill="#FFFF00"/><rect x="7" y="6" width="1" height="1" fill="#FFFFFF"/><rect x="8" y="6" width="1" height="1" fill="#000000"/><rect x="9" y="6" width="1" height="1" fill="#A0A0A0"/><rect x="10" y="6" width="1" height="1" fill="#FFFF00"/><rect x="11" y="6" width="1" height="1" fill="#000000"/><rect x="12" y="6" width="1" height="1" fill="#FFFF00"/><rect x="13" y="6" width="1" height="1" fill="#000000"/><rect x="14" y="6" width="1" height="1" fill="#FFFF00"/><rect x="15" y="6" width="1" height="1" fill="#FFFFFF"/><rect x="16" y="6" width="1" height="1" fill="#000000"/><rect x="1" y="7" width="1" height="1" fill="#A0A0A0"/><rect x="2" y="7" width="1" height="1" fill="#FFFF00"/><rect x="3" y="7" width="1" height="1" fill="#FFFFFF"/><rect x="4" y="7" width="1" height="1" fill="#FFFF00"/><rect x="5" y="7" width="1" height="1" fill="#FFFFFF"/><rect x="6" y="7" width="1" height="1" fill="#FFFF00"/><rect x="7" y="7" width="1" height="1" fill="#FFFFFF"/><rect x="8" y="7" width="1" height="1" fill="#000000"/><rect x="9" y="7" width="1" height="1" fill="#A0A0A0"/><rect x="10" y="7" width="1" height="1" fill="#FFFF00"/><rect x="11" y="7" width="1" height="1" fill="#FFFFFF"/><rect x="12" y="7" width="1" height="1" fill="#FFFF00"/><rect x="13" y="7" width="1" height="1" fill="#FFFFFF"/><rect x="14" y="7" width="1" height="1" fill="#FFFF00"/><rect x="15" y="7" width="1" height="1" fill="#FFFFFF"/><rect x="16" y="7" width="1" height="1" fill="#000000"/><rect x="1" y="8" width="1" height="1" fill="#A0A0A0"/><rect x="2" y="8" width="1" height="1" fill="#FFFF00"/><rect x="3" y="8" width="1" height="1" fill="#000000"/><rect x="4" y="8" width="1" height="1" fill="#FFFF00"/><rect x="5" y="8" width="1" height="1" fill="#000000"/><rect x="6" y="8" width="1" height="1" fill="#FFFF00"/><rect x="7" y="8" width="1" height="1" fill="#FFFFFF"/><rect x="8" y="8" width="1" height="1" fill="#000000"/><rect x="9" y="8" width="1" height="1" fill="#A0A0A0"/><rect x="10" y="8" width="1" height="1" fill="#FFFF00"/><rect x="11" y="8" width="1" height="1" fill="#000000"/><rect x="12" y="8" width="1" height="1" fill="#FFFF00"/><rect x="13" y="8" width="1" height="1" fill="#000000"/><rect x="14" y="8" width="1" height="1" fill="#FFFF00"/><rect x="15" y="8" width="1" height="1" fill="#FFFFFF"/><rect x="16" y="8" width="1" height="1" fill="#000000"/><rect x="1" y="9" width="1" height="1" fill="#A0A0A0"/><rect x="2" y="9" width="1" height="1" fill="#FFFF00"/><rect x="3" y="9" width="1" height="1" fill="#FFFFFF"/><rect x="4" y="9" width="1" height="1" fill="#FFFF00"/><rect x="5" y="9" width="1" height="1" fill="#FFFFFF"/><rect x="6" y="9" width="1" height="1" fill="#FFFF00"/><rect x="7" y="9" width="1" height="1" fill="#FFFFFF"/><rect x="8" y="9" width="1" height="1" fill="#000000"/><rect x="9" y="9" width="1" height="1" fill="#A0A0A0"/><rect x="10" y="9" width="1" height="1" fill="#FFFF00"/><rect x="11" y="9" width="1" height="1" fill="#FFFFFF"/><rect x="12" y="9" width="1" height="1" fill="#FFFF00"/><rect x="13" y="9" width="1" height="1" fill="#FFFFFF"/><rect x="14" y="9" width="1" height="1" fill="#FFFF00"/><rect x="15" y="9" width="1" height="1" fill="#FFFFFF"/><rect x="16" y="9" width="1" height="1" fill="#000000"/><rect x="1" y="10" width="1" height="1" fill="#A0A0A0"/><rect x="2" y="10" width="1" height="1" fill="#FFFF00"/><rect x="3" y="10" width="1" height="1" fill="#000000"/><rect x="4" y="10" width="1" height="1" fill="#FFFF00"/><rect x="5" y="10" width="1" height="1" fill="#000000"/><rect x="6" y="10" width="1" height="1" fill="#FFFF00"/><rect x="7" y="10" width="1" height="1" fill="#FFFFFF"/><rect x="8" y="10" width="1" height="1" fill="#000000"/><rect x="9" y="10" width="1" height="1" fill="#A0A0A0"/><rect x="10" y="10" width="1" height="1" fill="#FFFF00"/><rect x="11" y="10" width="1" height="1" fill="#000000"/><rect x="12" y="10" width="1" height="1" fill="#FFFF00"/><rect x="13" y="10" width="1" height="1" fill="#000000"/><rect x="14" y="10" width="1" height="1" fill="#FFFF00"/><rect x="15" y="10" width="1" height="1" fill="#FFFFFF"/><rect x="16" y="10" width="1" height="1" fill="#000000"/><rect x="1" y="11" width="1" height="1" fill="#A0A0A0"/><rect x="2" y="11" width="1" height="1" fill="#FFFF00"/><rect x="3" y="11" width="1" height="1" fill="#FFFFFF"/><rect x="4" y="11" width="1" height="1" fill="#FFFF00"/><rect x="5" y="11" width="1" height="1" fill="#FFFFFF"/><rect x="6" y="11" width="1" height="1" fill="#FFFF00"/><rect x="7" y="11" width="1" height="1" fill="#FFFFFF"/><rect x="8" y="11" width="1" height="1" fill="#000000"/><rect x="9" y="11" width="1" height="1" fill="#A0A0A0"/><rect x="10" y="11" width="1" height="1" fill="#FFFF00"/><rect x="11" y="11" width="1" height="1" fill="#FFFFFF"/><rect x="12" y="11" width="1" height="1" fill="#FFFF00"/><rect x="13" y="11" width="1" height="1" fill="#FFFFFF"/><rect x="14" y="11" width="1" height="1" fill="#FFFF00"/><rect x="15" y="11" width="1" height="1" fill="#FFFFFF"/><rect x="16" y="11" width="1" height="1" fill="#000000"/><rect x="1" y="12" width="1" height="1" fill="#A0A0A0"/><rect x="2" y="12" width="1" height="1" fill="#FFFF00"/><rect x="3" y="12" width="1" height="1" fill="#000000"/><rect x="4" y="12" width="1" height="1" fill="#FFFF00"/><rect x="5" y="12" width="1" height="1" fill="#000000"/><rect x="6" y="12" width="1" height="1" fill="#FFFF00"/><rect x="7" y="12" width="1" height="1" fill="#FFFFFF"/><rect x="8" y="12" width="1" height="1" fill="#000000"/><rect x="9" y="12" width="1" height="1" fill="#A0A0A0"/><rect x="10" y="12" width="1" height="1" fill="#FFFF00"/><rect x="11" y="12" width="1" height="1" fill="#000000"/><rect x="12" y="12" width="1" height="1" fill="#FFFF00"/><rect x="13" y="12" width="1" height="1" fill="#000000"/><rect x="14" y="12" width="1" height="1" fill="#FFFF00"/><rect x="15" y="12" width="1" height="1" fill="#FFFFFF"/><rect x="16" y="12" width="1" height="1" fill="#000000"/><rect x="1" y="13" width="1" height="1" fill="#A0A0A0"/><rect x="2" y="13" width="1" height="1" fill="#FFFF00"/><rect x="3" y="13" width="1" height="1" fill="#FFFFFF"/><rect x="4" y="13" width="1" height="1" fill="#FFFF00"/><rect x="5" y="13" width="1" height="1" fill="#FFFFFF"/><rect x="6" y="13" width="1" height="1" fill="#FFFF00"/><rect x="7" y="13" width="1" height="1" fill="#FFFFFF"/><rect x="8" y="13" width="1" height="1" fill="#000000"/><rect x="9" y="13" width="1" height="1" fill="#A0A0A0"/><rect x="10" y="13" width="1" height="1" fill="#FFFF00"/><rect x="11" y="13" width="1" height="1" fill="#FFFFFF"/><rect x="12" y="13" width="1" height="1" fill="#FFFF00"/><rect x="13" y="13" width="1" height="1" fill="#FFFFFF"/><rect x="14" y="13" width="1" height="1" fill="#FFFF00"/><rect x="15" y="13" width="1" height="1" fill="#FFFFFF"/><rect x="16" y="13" width="1" height="1" fill="#000000"/><rect x="1" y="14" width="1" height="1" fill="#A0A0A0"/><rect x="2" y="14" width="6" height="1" fill="#FFFFFF"/><rect x="8" y="14" width="1" height="1" fill="#000000"/><rect x="9" y="14" width="1" height="1" fill="#A0A0A0"/><rect x="10" y="14" width="6" height="1" fill="#FFFFFF"/><rect x="16" y="14" width="1" height="1" fill="#000000"/><rect x="1" y="15" width="8" height="1" fill="#000000"/><rect x="10" y="15" width="8" height="1" fill="#000000"/></svg>
<div class="a it" style="left:66px;top:239px;letter-spacing:0.4px">Site</div>
<svg class="a" style="left:241px;top:109px" width="18" height="18" viewBox="0 0 18 18" shape-rendering="crispEdges"><rect x="3" y="2" width="1" height="1" fill="#909090"/><rect x="14" y="2" width="1" height="1" fill="#909090"/><rect x="4" y="3" width="1" height="1" fill="#909090"/><rect x="8" y="3" width="2" height="1" fill="#000000"/><rect x="13" y="3" width="1" height="1" fill="#909090"/><rect x="5" y="4" width="1" height="1" fill="#909090"/><rect x="8" y="4" width="2" height="1" fill="#000000"/><rect x="12" y="4" width="1" height="1" fill="#909090"/><rect x="8" y="5" width="2" height="1" fill="#000000"/><rect x="7" y="6" width="1" height="1" fill="#000000"/><rect x="8" y="6" width="1" height="1" fill="#FFFF00"/><rect x="9" y="6" width="1" height="1" fill="#FFFFFF"/><rect x="10" y="6" width="1" height="1" fill="#000000"/><rect x="6" y="7" width="1" height="1" fill="#000000"/><rect x="7" y="7" width="2" height="1" fill="#FFFF00"/><rect x="9" y="7" width="1" height="1" fill="#FFFFFF"/><rect x="10" y="7" width="1" height="1" fill="#FFFF00"/><rect x="11" y="7" width="1" height="1" fill="#000000"/><rect x="1" y="8" width="3" height="1" fill="#909090"/><rect x="5" y="8" width="1" height="1" fill="#000000"/><rect x="6" y="8" width="3" height="1" fill="#FFFF00"/><rect x="9" y="8" width="1" height="1" fill="#FFFFFF"/><rect x="10" y="8" width="2" height="1" fill="#FFFF00"/><rect x="12" y="8" width="1" height="1" fill="#000000"/><rect x="14" y="8" width="3" height="1" fill="#909090"/><rect x="5" y="9" width="1" height="1" fill="#000000"/><rect x="6" y="9" width="3" height="1" fill="#FFFF00"/><rect x="9" y="9" width="1" height="1" fill="#FFFFFF"/><rect x="10" y="9" width="2" height="1" fill="#FFFF00"/><rect x="12" y="9" width="1" height="1" fill="#000000"/><rect x="5" y="10" width="1" height="1" fill="#000000"/><rect x="6" y="10" width="3" height="1" fill="#FFFF00"/><rect x="9" y="10" width="1" height="1" fill="#FFFFFF"/><rect x="10" y="10" width="2" height="1" fill="#FFFF00"/><rect x="12" y="10" width="1" height="1" fill="#000000"/><rect x="4" y="11" width="1" height="1" fill="#000000"/><rect x="5" y="11" width="4" height="1" fill="#FFFF00"/><rect x="9" y="11" width="1" height="1" fill="#FFFFFF"/><rect x="10" y="11" width="3" height="1" fill="#FFFF00"/><rect x="13" y="11" width="1" height="1" fill="#000000"/><rect x="3" y="12" width="5" height="1" fill="#000000"/><rect x="8" y="12" width="2" height="1" fill="#FFFFFF"/><rect x="10" y="12" width="5" height="1" fill="#000000"/><rect x="8" y="13" width="2" height="1" fill="#000000"/><rect x="3" y="15" width="1" height="1" fill="#909090"/><rect x="14" y="15" width="1" height="1" fill="#909090"/><rect x="2" y="16" width="1" height="1" fill="#909090"/><rect x="15" y="16" width="1" height="1" fill="#909090"/></svg>
<div class="a it" style="left:266px;top:111px;letter-spacing:0.33px">Alarm</div>
<svg class="a" style="left:241px;top:135px" width="18" height="18" viewBox="0 0 18 18" shape-rendering="crispEdges"><rect x="8" y="4" width="2" height="1" fill="#000000"/><rect x="13" y="4" width="2" height="1" fill="#000000"/><rect x="7" y="5" width="1" height="1" fill="#000000"/><rect x="8" y="5" width="2" height="1" fill="#FFFF00"/><rect x="10" y="5" width="1" height="1" fill="#000000"/><rect x="12" y="5" width="1" height="1" fill="#000000"/><rect x="13" y="5" width="2" height="1" fill="#FFFF00"/><rect x="15" y="5" width="1" height="1" fill="#000000"/><rect x="6" y="6" width="1" height="1" fill="#000000"/><rect x="7" y="6" width="4" height="1" fill="#FFFF00"/><rect x="11" y="6" width="1" height="1" fill="#000000"/><rect x="12" y="6" width="4" height="1" fill="#FFFF00"/><rect x="16" y="6" width="1" height="1" fill="#FF8000"/><rect x="5" y="7" width="2" height="1" fill="#FF0000"/><rect x="7" y="7" width="3" height="1" fill="#FFFF00"/><rect x="10" y="7" width="2" height="1" fill="#FF0000"/><rect x="12" y="7" width="3" height="1" fill="#FFFF00"/><rect x="15" y="7" width="1" height="1" fill="#FF8000"/><rect x="4" y="8" width="4" height="1" fill="#FF0000"/><rect x="8" y="8" width="1" height="1" fill="#FFFF00"/><rect x="9" y="8" width="4" height="1" fill="#FF0000"/><rect x="13" y="8" width="1" height="1" fill="#FFFF00"/><rect x="14" y="8" width="1" height="1" fill="#FF8000"/><rect x="3" y="9" width="3" height="1" fill="#FF0000"/><rect x="6" y="9" width="1" height="1" fill="#FFA0A0"/><rect x="7" y="9" width="4" height="1" fill="#FF0000"/><rect x="11" y="9" width="1" height="1" fill="#FFA0A0"/><rect x="12" y="9" width="2" height="1" fill="#FF0000"/><rect x="2" y="10" width="3" height="1" fill="#FF0000"/><rect x="5" y="10" width="1" height="1" fill="#FFA0A0"/><rect x="6" y="10" width="4" height="1" fill="#FF0000"/><rect x="10" y="10" width="1" height="1" fill="#FFA0A0"/><rect x="11" y="10" width="3" height="1" fill="#FF0000"/><rect x="1" y="11" width="1" height="1" fill="#000000"/><rect x="2" y="11" width="2" height="1" fill="#FF0000"/><rect x="4" y="11" width="1" height="1" fill="#FFA0A0"/><rect x="5" y="11" width="4" height="1" fill="#FF0000"/><rect x="9" y="11" width="1" height="1" fill="#FFA0A0"/><rect x="10" y="11" width="3" height="1" fill="#FF0000"/><rect x="1" y="12" width="2" height="1" fill="#FF0000"/><rect x="3" y="12" width="1" height="1" fill="#FFA0A0"/><rect x="4" y="12" width="4" height="1" fill="#FF0000"/><rect x="8" y="12" width="1" height="1" fill="#FFA0A0"/><rect x="9" y="12" width="3" height="1" fill="#FF0000"/><rect x="1" y="13" width="1" height="1" fill="#FF0000"/><rect x="2" y="13" width="1" height="1" fill="#FFA0A0"/><rect x="3" y="13" width="4" height="1" fill="#FF0000"/><rect x="7" y="13" width="1" height="1" fill="#FFA0A0"/><rect x="8" y="13" width="3" height="1" fill="#FF0000"/><rect x="1" y="14" width="9" height="1" fill="#FF0000"/><rect x="2" y="15" width="3" height="1" fill="#FF0000"/><rect x="6" y="15" width="3" height="1" fill="#FF0000"/></svg>
<div class="a it" style="left:266px;top:137px;letter-spacing:0.75px">Channel</div>
<svg class="a" style="left:241px;top:161px" width="18" height="18" viewBox="0 0 18 18" shape-rendering="crispEdges"><rect x="5" y="4" width="4" height="1" fill="#000000"/><rect x="4" y="5" width="1" height="1" fill="#000000"/><rect x="5" y="5" width="4" height="1" fill="#FFFFFF"/><rect x="9" y="5" width="3" height="1" fill="#000000"/><rect x="3" y="6" width="1" height="1" fill="#000000"/><rect x="4" y="6" width="8" height="1" fill="#FFFFFF"/><rect x="12" y="6" width="1" height="1" fill="#000000"/><rect x="3" y="7" width="1" height="1" fill="#000000"/><rect x="4" y="7" width="8" height="1" fill="#FFFFFF"/><rect x="12" y="7" width="3" height="1" fill="#000000"/><rect x="2" y="8" width="1" height="1" fill="#000000"/><rect x="3" y="8" width="12" height="1" fill="#FFFFFF"/><rect x="15" y="8" width="1" height="1" fill="#000000"/><rect x="1" y="9" width="1" height="1" fill="#000000"/><rect x="2" y="9" width="5" height="1" fill="#FFFFFF"/><rect x="7" y="9" width="6" height="1" fill="#202080"/><rect x="13" y="9" width="3" height="1" fill="#FFFFFF"/><rect x="16" y="9" width="1" height="1" fill="#000000"/><rect x="1" y="10" width="1" height="1" fill="#000000"/><rect x="2" y="10" width="5" height="1" fill="#FFFFFF"/><rect x="7" y="10" width="6" height="1" fill="#202080"/><rect x="13" y="10" width="3" height="1" fill="#FFFFFF"/><rect x="16" y="10" width="1" height="1" fill="#000000"/><rect x="1" y="11" width="1" height="1" fill="#000000"/><rect x="2" y="11" width="8" height="1" fill="#FFFFFF"/><rect x="10" y="11" width="1" height="1" fill="#202080"/><rect x="11" y="11" width="5" height="1" fill="#FFFFFF"/><rect x="16" y="11" width="1" height="1" fill="#000000"/><rect x="2" y="12" width="1" height="1" fill="#000000"/><rect x="3" y="12" width="12" height="1" fill="#FFFFFF"/><rect x="15" y="12" width="1" height="1" fill="#000000"/><rect x="3" y="13" width="13" height="1" fill="#000000"/><rect x="3" y="14" width="13" height="1" fill="#000000"/></svg>
<div class="a it" style="left:266px;top:163px;letter-spacing:0.37px">Cloud Service</div>
<svg class="a" style="left:241px;top:187px" width="18" height="18" viewBox="0 0 18 18" shape-rendering="crispEdges"><rect x="4" y="3" width="13" height="1" fill="#000000"/><rect x="3" y="4" width="1" height="1" fill="#000000"/><rect x="4" y="4" width="1" height="1" fill="#A0A0A0"/><rect x="5" y="4" width="1" height="1" fill="#606060"/><rect x="6" y="4" width="1" height="1" fill="#A0A0A0"/><rect x="7" y="4" width="1" height="1" fill="#606060"/><rect x="8" y="4" width="1" height="1" fill="#A0A0A0"/><rect x="9" y="4" width="1" height="1" fill="#606060"/><rect x="10" y="4" width="1" height="1" fill="#A0A0A0"/><rect x="11" y="4" width="1" height="1" fill="#606060"/><rect x="12" y="4" width="1" height="1" fill="#A0A0A0"/><rect x="13" y="4" width="1" height="1" fill="#606060"/><rect x="14" y="4" width="1" height="1" fill="#A0A0A0"/><rect x="15" y="4" width="1" height="1" fill="#606060"/><rect x="16" y="4" width="1" height="1" fill="#A0A0A0"/><rect x="17" y="4" width="1" height="1" fill="#000000"/><rect x="2" y="5" width="1" height="1" fill="#000000"/><rect x="3" y="5" width="1" height="1" fill="#A0A0A0"/><rect x="4" y="5" width="1" height="1" fill="#606060"/><rect x="5" y="5" width="1" height="1" fill="#A0A0A0"/><rect x="6" y="5" width="1" height="1" fill="#606060"/><rect x="7" y="5" width="1" height="1" fill="#A0A0A0"/><rect x="8" y="5" width="1" height="1" fill="#606060"/><rect x="9" y="5" width="1" height="1" fill="#A0A0A0"/><rect x="10" y="5" width="1" height="1" fill="#606060"/><rect x="11" y="5" width="1" height="1" fill="#A0A0A0"/><rect x="12" y="5" width="1" height="1" fill="#606060"/><rect x="13" y="5" width="1" height="1" fill="#A0A0A0"/><rect x="14" y="5" width="1" height="1" fill="#606060"/><rect x="15" y="5" width="2" height="1" fill="#A0A0A0"/><rect x="17" y="5" width="1" height="1" fill="#000000"/><rect x="1" y="6" width="1" height="1" fill="#A0A0A0"/><rect x="2" y="6" width="13" height="1" fill="#E8E8E8"/><rect x="15" y="6" width="2" height="1" fill="#A0A0A0"/><rect x="17" y="6" width="1" height="1" fill="#000000"/><rect x="1" y="7" width="2" height="1" fill="#E8E8E8"/><rect x="3" y="7" width="1" height="1" fill="#E00000"/><rect x="4" y="7" width="1" height="1" fill="#FFE000"/><rect x="5" y="7" width="3" height="1" fill="#E8E8E8"/><rect x="8" y="7" width="1" height="1" fill="#000000"/><rect x="9" y="7" width="1" height="1" fill="#E8E8E8"/><rect x="10" y="7" width="1" height="1" fill="#000000"/><rect x="11" y="7" width="1" height="1" fill="#E8E8E8"/><rect x="12" y="7" width="1" height="1" fill="#000000"/><rect x="13" y="7" width="2" height="1" fill="#E8E8E8"/><rect x="15" y="7" width="2" height="1" fill="#A0A0A0"/><rect x="17" y="7" width="1" height="1" fill="#000000"/><rect x="1" y="8" width="1" height="1" fill="#A0A0A0"/><rect x="2" y="8" width="13" height="1" fill="#E8E8E8"/><rect x="15" y="8" width="2" height="1" fill="#A0A0A0"/><rect x="17" y="8" width="1" height="1" fill="#000000"/><rect x="1" y="9" width="14" height="1" fill="#E8E8E8"/><rect x="15" y="9" width="1" height="1" fill="#A0A0A0"/><rect x="16" y="9" width="1" height="1" fill="#000000"/><rect x="1" y="10" width="16" height="1" fill="#000000"/><rect x="1" y="11" width="1" height="1" fill="#A0A0A0"/><rect x="2" y="11" width="13" height="1" fill="#E8E8E8"/><rect x="15" y="11" width="2" height="1" fill="#A0A0A0"/><rect x="17" y="11" width="1" height="1" fill="#000000"/><rect x="1" y="12" width="2" height="1" fill="#E8E8E8"/><rect x="3" y="12" width="1" height="1" fill="#E00000"/><rect x="4" y="12" width="1" height="1" fill="#FFE000"/><rect x="5" y="12" width="3" height="1" fill="#E8E8E8"/><rect x="8" y="12" width="1" height="1" fill="#000000"/><rect x="9" y="12" width="1" height="1" fill="#E8E8E8"/><rect x="10" y="12" width="1" height="1" fill="#000000"/><rect x="11" y="12" width="1" height="1" fill="#E8E8E8"/><rect x="12" y="12" width="1" height="1" fill="#000000"/><rect x="13" y="12" width="2" height="1" fill="#E8E8E8"/><rect x="15" y="12" width="2" height="1" fill="#A0A0A0"/><rect x="17" y="12" width="1" height="1" fill="#000000"/><rect x="1" y="13" width="1" height="1" fill="#A0A0A0"/><rect x="2" y="13" width="13" height="1" fill="#E8E8E8"/><rect x="15" y="13" width="2" height="1" fill="#A0A0A0"/><rect x="17" y="13" width="1" height="1" fill="#000000"/><rect x="1" y="14" width="14" height="1" fill="#E8E8E8"/><rect x="15" y="14" width="1" height="1" fill="#A0A0A0"/><rect x="16" y="14" width="1" height="1" fill="#000000"/><rect x="2" y="15" width="14" height="1" fill="#000000"/></svg>
<div class="a it" style="left:266px;top:189px;letter-spacing:0.0px">PBX</div>
<svg class="a" style="left:241px;top:213px" width="18" height="18" viewBox="0 0 18 18" shape-rendering="crispEdges"><rect x="5" y="5" width="11" height="1" fill="#00B000"/><rect x="4" y="6" width="1" height="1" fill="#00B000"/><rect x="5" y="6" width="10" height="1" fill="#FFC800"/><rect x="15" y="6" width="1" height="1" fill="#00B000"/><rect x="16" y="6" width="1" height="1" fill="#000000"/><rect x="3" y="7" width="1" height="1" fill="#00B000"/><rect x="4" y="7" width="10" height="1" fill="#FFC800"/><rect x="14" y="7" width="2" height="1" fill="#00B000"/><rect x="16" y="7" width="1" height="1" fill="#000000"/><rect x="2" y="8" width="1" height="1" fill="#00B000"/><rect x="3" y="8" width="11" height="1" fill="#FFC800"/><rect x="14" y="8" width="1" height="1" fill="#00B000"/><rect x="15" y="8" width="1" height="1" fill="#009000"/><rect x="16" y="8" width="1" height="1" fill="#000000"/><rect x="1" y="9" width="1" height="1" fill="#00B000"/><rect x="2" y="9" width="12" height="1" fill="#FFFFFF"/><rect x="14" y="9" width="1" height="1" fill="#00B000"/><rect x="15" y="9" width="1" height="1" fill="#009000"/><rect x="16" y="9" width="1" height="1" fill="#000000"/><rect x="1" y="10" width="1" height="1" fill="#00B000"/><rect x="2" y="10" width="12" height="1" fill="#FFC800"/><rect x="14" y="10" width="1" height="1" fill="#00B000"/><rect x="15" y="10" width="1" height="1" fill="#009000"/><rect x="16" y="10" width="1" height="1" fill="#000000"/><rect x="1" y="11" width="1" height="1" fill="#00B000"/><rect x="2" y="11" width="1" height="1" fill="#FFC800"/><rect x="3" y="11" width="2" height="1" fill="#101060"/><rect x="5" y="11" width="1" height="1" fill="#FFC800"/><rect x="6" y="11" width="2" height="1" fill="#101060"/><rect x="8" y="11" width="1" height="1" fill="#FFC800"/><rect x="9" y="11" width="2" height="1" fill="#101060"/><rect x="11" y="11" width="3" height="1" fill="#FFC800"/><rect x="14" y="11" width="1" height="1" fill="#00B000"/><rect x="15" y="11" width="1" height="1" fill="#009000"/><rect x="16" y="11" width="1" height="1" fill="#000000"/><rect x="1" y="12" width="1" height="1" fill="#00B000"/><rect x="2" y="12" width="1" height="1" fill="#FFC800"/><rect x="3" y="12" width="1" height="1" fill="#101060"/><rect x="4" y="12" width="1" height="1" fill="#E0E0FF"/><rect x="5" y="12" width="1" height="1" fill="#FFC800"/><rect x="6" y="12" width="1" height="1" fill="#101060"/><rect x="7" y="12" width="1" height="1" fill="#E0E0FF"/><rect x="8" y="12" width="1" height="1" fill="#FFC800"/><rect x="9" y="12" width="1" height="1" fill="#101060"/><rect x="10" y="12" width="1" height="1" fill="#E0E0FF"/><rect x="11" y="12" width="3" height="1" fill="#FFC800"/><rect x="14" y="12" width="1" height="1" fill="#00B000"/><rect x="15" y="12" width="1" height="1" fill="#009000"/><rect x="16" y="12" width="1" height="1" fill="#000000"/><rect x="1" y="13" width="1" height="1" fill="#00B000"/><rect x="2" y="13" width="12" height="1" fill="#FFC800"/><rect x="14" y="13" width="1" height="1" fill="#00B000"/><rect x="15" y="13" width="1" height="1" fill="#000000"/><rect x="1" y="14" width="13" height="1" fill="#00B000"/><rect x="14" y="14" width="1" height="1" fill="#000000"/><rect x="2" y="15" width="12" height="1" fill="#000000"/></svg>
<div class="a it" style="left:266px;top:215px;letter-spacing:0.35px">Magic Box</div>
<svg class="a" style="left:241px;top:239px" width="18" height="18" viewBox="0 0 18 18" shape-rendering="crispEdges"><rect x="6" y="2" width="7" height="1" fill="#000000"/><rect x="5" y="3" width="9" height="1" fill="#000000"/><rect x="4" y="4" width="10" height="1" fill="#000000"/><rect x="3" y="5" width="11" height="1" fill="#000000"/><rect x="3" y="6" width="7" height="1" fill="#000000"/><rect x="10" y="6" width="3" height="1" fill="#F4F4F4"/><rect x="13" y="6" width="1" height="1" fill="#000000"/><rect x="3" y="7" width="5" height="1" fill="#000000"/><rect x="8" y="7" width="4" height="1" fill="#F4F4F4"/><rect x="12" y="7" width="1" height="1" fill="#0000E0"/><rect x="13" y="7" width="2" height="1" fill="#000000"/><rect x="3" y="8" width="4" height="1" fill="#000000"/><rect x="7" y="8" width="6" height="1" fill="#F4F4F4"/><rect x="13" y="8" width="1" height="1" fill="#000000"/><rect x="3" y="9" width="4" height="1" fill="#000000"/><rect x="7" y="9" width="6" height="1" fill="#F4F4F4"/><rect x="13" y="9" width="1" height="1" fill="#000000"/><rect x="3" y="10" width="4" height="1" fill="#000000"/><rect x="7" y="10" width="5" height="1" fill="#F4F4F4"/><rect x="12" y="10" width="1" height="1" fill="#000000"/><rect x="4" y="11" width="3" height="1" fill="#000000"/><rect x="7" y="11" width="5" height="1" fill="#F4F4F4"/><rect x="12" y="11" width="1" height="1" fill="#000000"/><rect x="4" y="12" width="2" height="1" fill="#000000"/><rect x="6" y="12" width="4" height="1" fill="#F4F4F4"/><rect x="10" y="12" width="2" height="1" fill="#000000"/><rect x="3" y="13" width="4" height="1" fill="#0000E0"/><rect x="7" y="13" width="3" height="1" fill="#F4F4F4"/><rect x="10" y="13" width="4" height="1" fill="#0000E0"/><rect x="3" y="14" width="5" height="1" fill="#0000E0"/><rect x="8" y="14" width="2" height="1" fill="#F4F4F4"/><rect x="10" y="14" width="4" height="1" fill="#0000E0"/><rect x="3" y="15" width="6" height="1" fill="#0000E0"/><rect x="9" y="15" width="1" height="1" fill="#F4F4F4"/><rect x="10" y="15" width="4" height="1" fill="#0000E0"/><rect x="3" y="16" width="11" height="1" fill="#0000E0"/></svg>
<div class="a it" style="left:266px;top:241px;letter-spacing:0.7px">User</div>
<svg class="a" style="left:241px;top:265px" width="18" height="18" viewBox="0 0 18 18" shape-rendering="crispEdges"><rect x="1" y="1" width="16" height="1" fill="#000000"/><rect x="1" y="2" width="1" height="1" fill="#000000"/><rect x="2" y="2" width="6" height="1" fill="#A8C898"/><rect x="8" y="2" width="1" height="1" fill="#000000"/><rect x="9" y="2" width="7" height="1" fill="#6070FF"/><rect x="16" y="2" width="1" height="1" fill="#000000"/><rect x="1" y="3" width="1" height="1" fill="#000000"/><rect x="2" y="3" width="2" height="1" fill="#A8C898"/><rect x="4" y="3" width="1" height="1" fill="#FFFFFF"/><rect x="5" y="3" width="1" height="1" fill="#A8C898"/><rect x="6" y="3" width="1" height="1" fill="#FFFFFF"/><rect x="7" y="3" width="1" height="1" fill="#A8C898"/><rect x="8" y="3" width="1" height="1" fill="#000000"/><rect x="9" y="3" width="7" height="1" fill="#6070FF"/><rect x="16" y="3" width="1" height="1" fill="#000000"/><rect x="1" y="4" width="1" height="1" fill="#000000"/><rect x="2" y="4" width="3" height="1" fill="#A8C898"/><rect x="5" y="4" width="1" height="1" fill="#FFFFFF"/><rect x="6" y="4" width="2" height="1" fill="#A8C898"/><rect x="8" y="4" width="1" height="1" fill="#000000"/><rect x="9" y="4" width="2" height="1" fill="#6070FF"/><rect x="11" y="4" width="1" height="1" fill="#FFFFFF"/><rect x="12" y="4" width="1" height="1" fill="#6070FF"/><rect x="13" y="4" width="1" height="1" fill="#FFFFFF"/><rect x="14" y="4" width="2" height="1" fill="#6070FF"/><rect x="16" y="4" width="1" height="1" fill="#000000"/><rect x="1" y="5" width="1" height="1" fill="#000000"/><rect x="2" y="5" width="2" height="1" fill="#A8C898"/><rect x="4" y="5" width="1" height="1" fill="#FFFFFF"/><rect x="5" y="5" width="1" height="1" fill="#A8C898"/><rect x="6" y="5" width="1" height="1" fill="#FFFFFF"/><rect x="7" y="5" width="1" height="1" fill="#A8C898"/><rect x="8" y="5" width="1" height="1" fill="#000000"/><rect x="9" y="5" width="2" height="1" fill="#6070FF"/><rect x="11" y="5" width="1" height="1" fill="#FFFFFF"/><rect x="12" y="5" width="1" height="1" fill="#6070FF"/><rect x="13" y="5" width="1" height="1" fill="#FFFFFF"/><rect x="14" y="5" width="2" height="1" fill="#6070FF"/><rect x="16" y="5" width="1" height="1" fill="#000000"/><rect x="1" y="6" width="1" height="1" fill="#000000"/><rect x="2" y="6" width="6" height="1" fill="#A8C898"/><rect x="8" y="6" width="1" height="1" fill="#000000"/><rect x="9" y="6" width="7" height="1" fill="#6070FF"/><rect x="16" y="6" width="1" height="1" fill="#000000"/><rect x="1" y="7" width="1" height="1" fill="#000000"/><rect x="2" y="7" width="6" height="1" fill="#A8C898"/><rect x="8" y="7" width="1" height="1" fill="#000000"/><rect x="9" y="7" width="7" height="1" fill="#6070FF"/><rect x="16" y="7" width="1" height="1" fill="#000000"/><rect x="1" y="8" width="16" height="1" fill="#000000"/><rect x="1" y="9" width="1" height="1" fill="#000000"/><rect x="2" y="9" width="6" height="1" fill="#FFFF00"/><rect x="8" y="9" width="1" height="1" fill="#000000"/><rect x="9" y="9" width="7" height="1" fill="#FF0000"/><rect x="16" y="9" width="1" height="1" fill="#000000"/><rect x="1" y="10" width="1" height="1" fill="#000000"/><rect x="2" y="10" width="6" height="1" fill="#FFFF00"/><rect x="8" y="10" width="1" height="1" fill="#000000"/><rect x="9" y="10" width="7" height="1" fill="#FF0000"/><rect x="16" y="10" width="1" height="1" fill="#000000"/><rect x="1" y="11" width="1" height="1" fill="#000000"/><rect x="2" y="11" width="2" height="1" fill="#FFFF00"/><rect x="4" y="11" width="1" height="1" fill="#FFFFFF"/><rect x="5" y="11" width="1" height="1" fill="#FFFF00"/><rect x="6" y="11" width="1" height="1" fill="#FFFFFF"/><rect x="7" y="11" width="1" height="1" fill="#FFFF00"/><rect x="8" y="11" width="1" height="1" fill="#000000"/><rect x="9" y="11" width="3" height="1" fill="#FF0000"/><rect x="12" y="11" width="1" height="1" fill="#FFFFFF"/><rect x="13" y="11" width="3" height="1" fill="#FF0000"/><rect x="16" y="11" width="1" height="1" fill="#000000"/><rect x="1" y="12" width="1" height="1" fill="#000000"/><rect x="2" y="12" width="2" height="1" fill="#FFFF00"/><rect x="4" y="12" width="1" height="1" fill="#FFFFFF"/><rect x="5" y="12" width="1" height="1" fill="#FFFF00"/><rect x="6" y="12" width="1" height="1" fill="#FFFFFF"/><rect x="7" y="12" width="1" height="1" fill="#FFFF00"/><rect x="8" y="12" width="1" height="1" fill="#000000"/><rect x="9" y="12" width="3" height="1" fill="#FF0000"/><rect x="12" y="12" width="1" height="1" fill="#FFFFFF"/><rect x="13" y="12" width="3" height="1" fill="#FF0000"/><rect x="16" y="12" width="1" height="1" fill="#000000"/><rect x="1" y="13" width="1" height="1" fill="#000000"/><rect x="2" y="13" width="6" height="1" fill="#FFFF00"/><rect x="8" y="13" width="1" height="1" fill="#000000"/><rect x="9" y="13" width="7" height="1" fill="#FF0000"/><rect x="16" y="13" width="1" height="1" fill="#000000"/><rect x="1" y="14" width="1" height="1" fill="#000000"/><rect x="2" y="14" width="6" height="1" fill="#FFFF00"/><rect x="8" y="14" width="1" height="1" fill="#000000"/><rect x="9" y="14" width="7" height="1" fill="#FF0000"/><rect x="16" y="14" width="1" height="1" fill="#000000"/><rect x="1" y="15" width="1" height="1" fill="#000000"/><rect x="2" y="15" width="6" height="1" fill="#FFFF00"/><rect x="8" y="15" width="1" height="1" fill="#000000"/><rect x="9" y="15" width="7" height="1" fill="#FF0000"/><rect x="16" y="15" width="1" height="1" fill="#000000"/><rect x="1" y="16" width="16" height="1" fill="#000000"/></svg>
<div class="a it" style="left:266px;top:267px;letter-spacing:0.5px">Display Board</div>
<svg class="a" style="left:241px;top:291px" width="18" height="18" viewBox="0 0 18 18" shape-rendering="crispEdges"><rect x="1" y="3" width="12" height="1" fill="#000000"/><rect x="1" y="4" width="1" height="1" fill="#000000"/><rect x="2" y="4" width="10" height="1" fill="#FFFFFF"/><rect x="12" y="4" width="1" height="1" fill="#000000"/><rect x="14" y="4" width="2" height="1" fill="#FF0000"/><rect x="1" y="5" width="1" height="1" fill="#000000"/><rect x="2" y="5" width="1" height="1" fill="#FFFFFF"/><rect x="3" y="5" width="7" height="1" fill="#808080"/><rect x="10" y="5" width="2" height="1" fill="#FFFFFF"/><rect x="12" y="5" width="1" height="1" fill="#000000"/><rect x="13" y="5" width="1" height="1" fill="#FF0000"/><rect x="14" y="5" width="1" height="1" fill="#FFFFFF"/><rect x="15" y="5" width="2" height="1" fill="#FF0000"/><rect x="1" y="6" width="1" height="1" fill="#000000"/><rect x="2" y="6" width="10" height="1" fill="#FFFFFF"/><rect x="12" y="6" width="1" height="1" fill="#FF0000"/><rect x="13" y="6" width="1" height="1" fill="#FFFFFF"/><rect x="14" y="6" width="1" height="1" fill="#FF0000"/><rect x="15" y="6" width="1" height="1" fill="#FFFFFF"/><rect x="16" y="6" width="1" height="1" fill="#FF0000"/><rect x="1" y="7" width="1" height="1" fill="#000000"/><rect x="2" y="7" width="1" height="1" fill="#FFFFFF"/><rect x="3" y="7" width="7" height="1" fill="#808080"/><rect x="10" y="7" width="1" height="1" fill="#FFFFFF"/><rect x="11" y="7" width="1" height="1" fill="#FF0000"/><rect x="12" y="7" width="1" height="1" fill="#FFFFFF"/><rect x="13" y="7" width="1" height="1" fill="#FF0000"/><rect x="14" y="7" width="1" height="1" fill="#FFFFFF"/><rect x="15" y="7" width="1" height="1" fill="#FF0000"/><rect x="1" y="8" width="1" height="1" fill="#000000"/><rect x="2" y="8" width="8" height="1" fill="#FFFFFF"/><rect x="10" y="8" width="1" height="1" fill="#FF0000"/><rect x="11" y="8" width="1" height="1" fill="#FFFFFF"/><rect x="12" y="8" width="1" height="1" fill="#FF0000"/><rect x="13" y="8" width="1" height="1" fill="#FFFFFF"/><rect x="14" y="8" width="1" height="1" fill="#FF0000"/><rect x="1" y="9" width="1" height="1" fill="#000000"/><rect x="2" y="9" width="1" height="1" fill="#FFFFFF"/><rect x="3" y="9" width="5" height="1" fill="#808080"/><rect x="8" y="9" width="1" height="1" fill="#FFFFFF"/><rect x="9" y="9" width="1" height="1" fill="#FF0000"/><rect x="10" y="9" width="1" height="1" fill="#FFFFFF"/><rect x="11" y="9" width="1" height="1" fill="#FF0000"/><rect x="12" y="9" width="1" height="1" fill="#FFFFFF"/><rect x="13" y="9" width="1" height="1" fill="#FF0000"/><rect x="14" y="9" width="1" height="1" fill="#000000"/><rect x="1" y="10" width="1" height="1" fill="#000000"/><rect x="2" y="10" width="6" height="1" fill="#FFFFFF"/><rect x="8" y="10" width="1" height="1" fill="#FF0000"/><rect x="9" y="10" width="1" height="1" fill="#FFFFFF"/><rect x="10" y="10" width="1" height="1" fill="#FF0000"/><rect x="11" y="10" width="1" height="1" fill="#FFFFFF"/><rect x="12" y="10" width="1" height="1" fill="#FF0000"/><rect x="13" y="10" width="1" height="1" fill="#FFFFFF"/><rect x="14" y="10" width="1" height="1" fill="#000000"/><rect x="1" y="11" width="1" height="1" fill="#000000"/><rect x="2" y="11" width="1" height="1" fill="#FFFFFF"/><rect x="3" y="11" width="3" height="1" fill="#808080"/><rect x="6" y="11" width="1" height="1" fill="#FFFFFF"/><rect x="7" y="11" width="1" height="1" fill="#FF0000"/><rect x="8" y="11" width="1" height="1" fill="#FFFFFF"/><rect x="9" y="11" width="1" height="1" fill="#FF0000"/><rect x="10" y="11" width="1" height="1" fill="#FFFFFF"/><rect x="11" y="11" width="1" height="1" fill="#FF0000"/><rect x="12" y="11" width="2" height="1" fill="#FFFFFF"/><rect x="14" y="11" width="1" height="1" fill="#000000"/><rect x="1" y="12" width="1" height="1" fill="#000000"/><rect x="2" y="12" width="4" height="1" fill="#FFFFFF"/><rect x="6" y="12" width="2" height="1" fill="#000000"/><rect x="8" y="12" width="1" height="1" fill="#FFFFFF"/><rect x="9" y="12" width="2" height="1" fill="#FF0000"/><rect x="11" y="12" width="3" height="1" fill="#FFFFFF"/><rect x="14" y="12" width="1" height="1" fill="#000000"/><rect x="1" y="13" width="1" height="1" fill="#000000"/><rect x="2" y="13" width="1" height="1" fill="#FFFFFF"/><rect x="3" y="13" width="3" height="1" fill="#808080"/><rect x="6" y="13" width="2" height="1" fill="#000000"/><rect x="8" y="13" width="1" height="1" fill="#FF0000"/><rect x="9" y="13" width="5" height="1" fill="#FFFFFF"/><rect x="14" y="13" width="1" height="1" fill="#000000"/><rect x="1" y="14" width="1" height="1" fill="#000000"/><rect x="2" y="14" width="12" height="1" fill="#FFFFFF"/><rect x="14" y="14" width="1" height="1" fill="#000000"/><rect x="1" y="15" width="1" height="1" fill="#000000"/><rect x="2" y="15" width="12" height="1" fill="#FFFFFF"/><rect x="14" y="15" width="1" height="1" fill="#000000"/><rect x="1" y="16" width="14" height="1" fill="#000000"/></svg>
<div class="a it" style="left:266px;top:293px;letter-spacing:0.85px">Question</div>
<svg class="a" style="left:429px;top:109px" width="18" height="18" viewBox="0 0 18 18" shape-rendering="crispEdges"><g shape-rendering="geometricPrecision"><path d="M1.2 10.6L10.6 1.2L16.4 7L7 16.4Z" fill="#DCE4DC" stroke="#8C8C8C" stroke-width="1.5"/><path d="M5 10.5L10.5 5" stroke="#80E080" stroke-width="1.4"/><path d="M7.5 8L9 6.5" stroke="#FFFFFF" stroke-width="1.6"/><circle cx="3.6" cy="15" r="1" fill="#909090"/><circle cx="12.6" cy="12.4" r="4.3" fill="#6CC81E" stroke="#3A8000" stroke-width="1"/><path d="M10 14.2L15 10.2" stroke="#C8FF80" stroke-width="1.6"/></g></svg>
<div class="a it" style="left:454px;top:111px;letter-spacing:0.34px">Billing Charge</div>
<svg class="a" style="left:429px;top:135px" width="18" height="18" viewBox="0 0 18 18" shape-rendering="crispEdges"><rect x="9" y="1" width="2" height="1" fill="#909090"/><rect x="11" y="1" width="1" height="1" fill="#000000"/><rect x="8" y="2" width="1" height="1" fill="#909090"/><rect x="9" y="2" width="3" height="1" fill="#FFFFFF"/><rect x="12" y="2" width="1" height="1" fill="#000000"/><rect x="8" y="3" width="1" height="1" fill="#909090"/><rect x="9" y="3" width="3" height="1" fill="#FFFFFF"/><rect x="12" y="3" width="1" height="1" fill="#000000"/><rect x="9" y="4" width="3" height="1" fill="#000000"/><rect x="10" y="5" width="2" height="1" fill="#000000"/><rect x="7" y="6" width="4" height="1" fill="#909090"/><rect x="11" y="6" width="2" height="1" fill="#000000"/><rect x="13" y="6" width="3" height="1" fill="#909090"/><rect x="2" y="7" width="1" height="1" fill="#909090"/><rect x="3" y="7" width="1" height="1" fill="#000000"/><rect x="6" y="7" width="1" height="1" fill="#909090"/><rect x="7" y="7" width="9" height="1" fill="#FFFFFF"/><rect x="16" y="7" width="1" height="1" fill="#000000"/><rect x="1" y="8" width="1" height="1" fill="#909090"/><rect x="2" y="8" width="2" height="1" fill="#FFFFFF"/><rect x="4" y="8" width="1" height="1" fill="#000000"/><rect x="6" y="8" width="1" height="1" fill="#909090"/><rect x="7" y="8" width="9" height="1" fill="#FFFFFF"/><rect x="16" y="8" width="1" height="1" fill="#000000"/><rect x="1" y="9" width="1" height="1" fill="#909090"/><rect x="2" y="9" width="2" height="1" fill="#FFFFFF"/><rect x="4" y="9" width="1" height="1" fill="#000000"/><rect x="6" y="9" width="1" height="1" fill="#909090"/><rect x="7" y="9" width="5" height="1" fill="#FFFFFF"/><rect x="12" y="9" width="2" height="1" fill="#FF0000"/><rect x="14" y="9" width="2" height="1" fill="#FFFFFF"/><rect x="16" y="9" width="1" height="1" fill="#000000"/><rect x="2" y="10" width="2" height="1" fill="#000000"/><rect x="6" y="10" width="1" height="1" fill="#909090"/><rect x="7" y="10" width="3" height="1" fill="#FFFFFF"/><rect x="10" y="10" width="2" height="1" fill="#00E000"/><rect x="12" y="10" width="2" height="1" fill="#FF0000"/><rect x="14" y="10" width="2" height="1" fill="#FFFFFF"/><rect x="16" y="10" width="1" height="1" fill="#000000"/><rect x="6" y="11" width="1" height="1" fill="#909090"/><rect x="7" y="11" width="1" height="1" fill="#FFFFFF"/><rect x="8" y="11" width="2" height="1" fill="#0000FF"/><rect x="10" y="11" width="2" height="1" fill="#00E000"/><rect x="12" y="11" width="2" height="1" fill="#FF0000"/><rect x="14" y="11" width="2" height="1" fill="#FFFFFF"/><rect x="16" y="11" width="1" height="1" fill="#000000"/><rect x="2" y="12" width="1" height="1" fill="#909090"/><rect x="3" y="12" width="1" height="1" fill="#000000"/><rect x="6" y="12" width="1" height="1" fill="#909090"/><rect x="7" y="12" width="1" height="1" fill="#FFFFFF"/><rect x="8" y="12" width="2" height="1" fill="#0000FF"/><rect x="10" y="12" width="2" height="1" fill="#00E000"/><rect x="12" y="12" width="2" height="1" fill="#FF0000"/><rect x="14" y="12" width="2" height="1" fill="#FFFFFF"/><rect x="16" y="12" width="1" height="1" fill="#000000"/><rect x="1" y="13" width="1" height="1" fill="#909090"/><rect x="2" y="13" width="2" height="1" fill="#FFFFFF"/><rect x="4" y="13" width="1" height="1" fill="#000000"/><rect x="6" y="13" width="1" height="1" fill="#909090"/><rect x="7" y="13" width="1" height="1" fill="#FFFFFF"/><rect x="8" y="13" width="2" height="1" fill="#0000FF"/><rect x="10" y="13" width="2" height="1" fill="#00E000"/><rect x="12" y="13" width="2" height="1" fill="#FF0000"/><rect x="14" y="13" width="2" height="1" fill="#FFFFFF"/><rect x="16" y="13" width="1" height="1" fill="#000000"/><rect x="1" y="14" width="1" height="1" fill="#909090"/><rect x="2" y="14" width="2" height="1" fill="#FFFFFF"/><rect x="4" y="14" width="1" height="1" fill="#000000"/><rect x="6" y="14" width="1" height="1" fill="#909090"/><rect x="7" y="14" width="9" height="1" fill="#FFFFFF"/><rect x="16" y="14" width="1" height="1" fill="#000000"/><rect x="2" y="15" width="2" height="1" fill="#000000"/><rect x="6" y="15" width="11" height="1" fill="#000000"/></svg>
<div class="a it" style="left:454px;top:137px;letter-spacing:0.45px">Stats Collector</div>
<svg class="a" style="left:429px;top:161px" width="18" height="18" viewBox="0 0 18 18" shape-rendering="crispEdges"><rect x="3" y="4" width="2" height="1" fill="#1838C0"/><rect x="11" y="4" width="5" height="1" fill="#1838C0"/><rect x="2" y="5" width="3" height="1" fill="#1838C0"/><rect x="10" y="5" width="1" height="1" fill="#1838C0"/><rect x="15" y="5" width="2" height="1" fill="#1838C0"/><rect x="1" y="6" width="4" height="1" fill="#1838C0"/><rect x="15" y="6" width="2" height="1" fill="#1838C0"/><rect x="3" y="7" width="2" height="1" fill="#1838C0"/><rect x="7" y="7" width="3" height="1" fill="#1838C0"/><rect x="14" y="7" width="2" height="1" fill="#1838C0"/><rect x="3" y="8" width="2" height="1" fill="#1838C0"/><rect x="6" y="8" width="1" height="1" fill="#1838C0"/><rect x="9" y="8" width="2" height="1" fill="#1838C0"/><rect x="12" y="8" width="3" height="1" fill="#1838C0"/><rect x="3" y="9" width="2" height="1" fill="#1838C0"/><rect x="10" y="9" width="1" height="1" fill="#1838C0"/><rect x="14" y="9" width="2" height="1" fill="#1838C0"/><rect x="3" y="10" width="2" height="1" fill="#1838C0"/><rect x="10" y="10" width="1" height="1" fill="#1838C0"/><rect x="15" y="10" width="2" height="1" fill="#1838C0"/><rect x="3" y="11" width="2" height="1" fill="#1838C0"/><rect x="9" y="11" width="2" height="1" fill="#1838C0"/><rect x="15" y="11" width="2" height="1" fill="#1838C0"/><rect x="3" y="12" width="2" height="1" fill="#1838C0"/><rect x="8" y="12" width="2" height="1" fill="#1838C0"/><rect x="11" y="12" width="5" height="1" fill="#1838C0"/><rect x="7" y="13" width="2" height="1" fill="#1838C0"/><rect x="6" y="14" width="6" height="1" fill="#1838C0"/></svg>
<div class="a it" style="left:454px;top:163px;letter-spacing:0.0px">LCR Plan</div>
<svg class="a" style="left:429px;top:187px" width="18" height="18" viewBox="0 0 18 18" shape-rendering="crispEdges"><rect x="1" y="1" width="16" height="1" fill="#3A6CC8"/><rect x="1" y="2" width="5" height="1" fill="#3A6CC8"/><rect x="6" y="2" width="6" height="1" fill="#FFFFFF"/><rect x="12" y="2" width="5" height="1" fill="#3A6CC8"/><rect x="1" y="3" width="4" height="1" fill="#3A6CC8"/><rect x="5" y="3" width="1" height="1" fill="#FFFFFF"/><rect x="6" y="3" width="6" height="1" fill="#3A6CC8"/><rect x="12" y="3" width="1" height="1" fill="#FFFFFF"/><rect x="13" y="3" width="4" height="1" fill="#3A6CC8"/><rect x="1" y="4" width="3" height="1" fill="#3A6CC8"/><rect x="4" y="4" width="1" height="1" fill="#FFFFFF"/><rect x="5" y="4" width="2" height="1" fill="#3A6CC8"/><rect x="7" y="4" width="4" height="1" fill="#FFFFFF"/><rect x="11" y="4" width="2" height="1" fill="#3A6CC8"/><rect x="13" y="4" width="1" height="1" fill="#FFFFFF"/><rect x="14" y="4" width="3" height="1" fill="#3A6CC8"/><rect x="1" y="5" width="2" height="1" fill="#3A6CC8"/><rect x="3" y="5" width="1" height="1" fill="#FFFFFF"/><rect x="4" y="5" width="2" height="1" fill="#3A6CC8"/><rect x="6" y="5" width="1" height="1" fill="#FFFFFF"/><rect x="7" y="5" width="4" height="1" fill="#3A6CC8"/><rect x="11" y="5" width="1" height="1" fill="#FFFFFF"/><rect x="12" y="5" width="2" height="1" fill="#3A6CC8"/><rect x="14" y="5" width="1" height="1" fill="#FFFFFF"/><rect x="15" y="5" width="2" height="1" fill="#3A6CC8"/><rect x="1" y="6" width="1" height="1" fill="#3A6CC8"/><rect x="2" y="6" width="1" height="1" fill="#FFFFFF"/><rect x="3" y="6" width="2" height="1" fill="#3A6CC8"/><rect x="5" y="6" width="1" height="1" fill="#FFFFFF"/><rect x="6" y="6" width="2" height="1" fill="#3A6CC8"/><rect x="8" y="6" width="2" height="1" fill="#FFFFFF"/><rect x="10" y="6" width="2" height="1" fill="#3A6CC8"/><rect x="12" y="6" width="1" height="1" fill="#FFFFFF"/><rect x="13" y="6" width="2" height="1" fill="#3A6CC8"/><rect x="15" y="6" width="1" height="1" fill="#FFFFFF"/><rect x="16" y="6" width="1" height="1" fill="#3A6CC8"/><rect x="1" y="7" width="1" height="1" fill="#3A6CC8"/><rect x="2" y="7" width="1" height="1" fill="#FFFFFF"/><rect x="3" y="7" width="1" height="1" fill="#3A6CC8"/><rect x="4" y="7" width="1" height="1" fill="#FFFFFF"/><rect x="5" y="7" width="2" height="1" fill="#3A6CC8"/><rect x="7" y="7" width="1" height="1" fill="#FFFFFF"/><rect x="8" y="7" width="2" height="1" fill="#3A6CC8"/><rect x="10" y="7" width="1" height="1" fill="#FFFFFF"/><rect x="11" y="7" width="2" height="1" fill="#3A6CC8"/><rect x="13" y="7" width="1" height="1" fill="#FFFFFF"/><rect x="14" y="7" width="1" height="1" fill="#3A6CC8"/><rect x="15" y="7" width="1" height="1" fill="#FFFFFF"/><rect x="16" y="7" width="1" height="1" fill="#3A6CC8"/><rect x="1" y="8" width="1" height="1" fill="#3A6CC8"/><rect x="2" y="8" width="1" height="1" fill="#FFFFFF"/><rect x="3" y="8" width="1" height="1" fill="#3A6CC8"/><rect x="4" y="8" width="1" height="1" fill="#FFFFFF"/><rect x="5" y="8" width="1" height="1" fill="#3A6CC8"/><rect x="6" y="8" width="1" height="1" fill="#FFFFFF"/><rect x="7" y="8" width="4" height="1" fill="#3A6CC8"/><rect x="11" y="8" width="1" height="1" fill="#FFFFFF"/><rect x="12" y="8" width="1" height="1" fill="#3A6CC8"/><rect x="13" y="8" width="1" height="1" fill="#FFFFFF"/><rect x="14" y="8" width="1" height="1" fill="#3A6CC8"/><rect x="15" y="8" width="1" height="1" fill="#FFFFFF"/><rect x="16" y="8" width="1" height="1" fill="#3A6CC8"/><rect x="1" y="9" width="1" height="1" fill="#3A6CC8"/><rect x="2" y="9" width="1" height="1" fill="#FFFFFF"/><rect x="3" y="9" width="1" height="1" fill="#3A6CC8"/><rect x="4" y="9" width="1" height="1" fill="#FFFFFF"/><rect x="5" y="9" width="1" height="1" fill="#3A6CC8"/><rect x="6" y="9" width="1" height="1" fill="#FFFFFF"/><rect x="7" y="9" width="4" height="1" fill="#3A6CC8"/><rect x="11" y="9" width="1" height="1" fill="#FFFFFF"/><rect x="12" y="9" width="1" height="1" fill="#3A6CC8"/><rect x="13" y="9" width="1" height="1" fill="#FFFFFF"/><rect x="14" y="9" width="1" height="1" fill="#3A6CC8"/><rect x="15" y="9" width="1" height="1" fill="#FFFFFF"/><rect x="16" y="9" width="1" height="1" fill="#3A6CC8"/><rect x="1" y="10" width="1" height="1" fill="#3A6CC8"/><rect x="2" y="10" width="1" height="1" fill="#FFFFFF"/><rect x="3" y="10" width="1" height="1" fill="#3A6CC8"/><rect x="4" y="10" width="1" height="1" fill="#FFFFFF"/><rect x="5" y="10" width="2" height="1" fill="#3A6CC8"/><rect x="7" y="10" width="1" height="1" fill="#FFFFFF"/><rect x="8" y="10" width="2" height="1" fill="#3A6CC8"/><rect x="10" y="10" width="1" height="1" fill="#FFFFFF"/><rect x="11" y="10" width="2" height="1" fill="#3A6CC8"/><rect x="13" y="10" width="1" height="1" fill="#FFFFFF"/><rect x="14" y="10" width="1" height="1" fill="#3A6CC8"/><rect x="15" y="10" width="1" height="1" fill="#FFFFFF"/><rect x="16" y="10" width="1" height="1" fill="#3A6CC8"/><rect x="1" y="11" width="1" height="1" fill="#3A6CC8"/><rect x="2" y="11" width="1" height="1" fill="#FFFFFF"/><rect x="3" y="11" width="2" height="1" fill="#3A6CC8"/><rect x="5" y="11" width="1" height="1" fill="#FFFFFF"/><rect x="6" y="11" width="2" height="1" fill="#3A6CC8"/><rect x="8" y="11" width="2" height="1" fill="#FFFFFF"/><rect x="10" y="11" width="2" height="1" fill="#3A6CC8"/><rect x="12" y="11" width="1" height="1" fill="#FFFFFF"/><rect x="13" y="11" width="2" height="1" fill="#3A6CC8"/><rect x="15" y="11" width="1" height="1" fill="#FFFFFF"/><rect x="16" y="11" width="1" height="1" fill="#3A6CC8"/><rect x="1" y="12" width="2" height="1" fill="#3A6CC8"/><rect x="3" y="12" width="1" height="1" fill="#FFFFFF"/><rect x="4" y="12" width="2" height="1" fill="#3A6CC8"/><rect x="6" y="12" width="1" height="1" fill="#FFFFFF"/><rect x="7" y="12" width="4" height="1" fill="#3A6CC8"/><rect x="11" y="12" width="1" height="1" fill="#FFFFFF"/><rect x="12" y="12" width="2" height="1" fill="#3A6CC8"/><rect x="14" y="12" width="1" height="1" fill="#FFFFFF"/><rect x="15" y="12" width="2" height="1" fill="#3A6CC8"/><rect x="1" y="13" width="3" height="1" fill="#3A6CC8"/><rect x="4" y="13" width="1" height="1" fill="#FFFFFF"/><rect x="5" y="13" width="2" height="1" fill="#3A6CC8"/><rect x="7" y="13" width="4" height="1" fill="#FFFFFF"/><rect x="11" y="13" width="2" height="1" fill="#3A6CC8"/><rect x="13" y="13" width="1" height="1" fill="#FFFFFF"/><rect x="14" y="13" width="3" height="1" fill="#3A6CC8"/><rect x="1" y="14" width="4" height="1" fill="#3A6CC8"/><rect x="5" y="14" width="1" height="1" fill="#FFFFFF"/><rect x="6" y="14" width="6" height="1" fill="#3A6CC8"/><rect x="12" y="14" width="1" height="1" fill="#FFFFFF"/><rect x="13" y="14" width="4" height="1" fill="#3A6CC8"/><rect x="1" y="15" width="5" height="1" fill="#3A6CC8"/><rect x="6" y="15" width="6" height="1" fill="#FFFFFF"/><rect x="12" y="15" width="5" height="1" fill="#3A6CC8"/><rect x="1" y="16" width="16" height="1" fill="#3A6CC8"/></svg>
<div class="a it" style="left:454px;top:189px;letter-spacing:0.27px">Echo</div>
<svg class="a" style="left:429px;top:213px" width="18" height="18" viewBox="0 0 18 18" shape-rendering="crispEdges"><defs><linearGradient id="gcoin" x1="0" x2="1" y1="0" y2="0"><stop offset="0" stop-color="#E6A400"/><stop offset="0.5" stop-color="#FFF2A8"/><stop offset="1" stop-color="#EDB400"/></linearGradient></defs><g shape-rendering="geometricPrecision"><rect x="6.6" y="1.2" width="5.4" height="13.4" rx="1.6" fill="url(#gcoin)" stroke="#E4A800" stroke-width="1"/><path d="M8 5.5h2.6M8 7.5h2.6M8 9.5h2.6M8 11.5h2.6" stroke="#F0C840" stroke-width="0.7"/><rect x="2" y="7.2" width="5.4" height="8.8" rx="1.6" fill="url(#gcoin)" stroke="#E4A800" stroke-width="1"/><path d="M3.4 10.5h2.6M3.4 12.5h2.6" stroke="#F0C840" stroke-width="0.7"/><rect x="10.6" y="10.8" width="6" height="5" rx="2.2" fill="url(#gcoin)" stroke="#E4A800" stroke-width="1"/></g></svg>
<div class="a it" style="left:454px;top:215px;letter-spacing:0.26px">Tariff Modifier</div>
<svg class="a" style="left:429px;top:239px" width="18" height="18" viewBox="0 0 18 18" shape-rendering="crispEdges"><rect x="6" y="1" width="6" height="1" fill="#000000"/><rect x="4" y="2" width="2" height="1" fill="#000000"/><rect x="6" y="2" width="2" height="1" fill="#00F000"/><rect x="8" y="2" width="3" height="1" fill="#2040F0"/><rect x="11" y="2" width="1" height="1" fill="#00F000"/><rect x="12" y="2" width="2" height="1" fill="#000000"/><rect x="3" y="3" width="1" height="1" fill="#000000"/><rect x="4" y="3" width="4" height="1" fill="#00F000"/><rect x="8" y="3" width="2" height="1" fill="#2040F0"/><rect x="10" y="3" width="2" height="1" fill="#00F000"/><rect x="12" y="3" width="2" height="1" fill="#2040F0"/><rect x="14" y="3" width="1" height="1" fill="#000000"/><rect x="2" y="4" width="1" height="1" fill="#000000"/><rect x="3" y="4" width="9" height="1" fill="#00F000"/><rect x="12" y="4" width="1" height="1" fill="#D8A8FF"/><rect x="13" y="4" width="2" height="1" fill="#2040F0"/><rect x="15" y="4" width="1" height="1" fill="#000000"/><rect x="2" y="5" width="1" height="1" fill="#000000"/><rect x="3" y="5" width="1" height="1" fill="#2040F0"/><rect x="4" y="5" width="7" height="1" fill="#00F000"/><rect x="11" y="5" width="3" height="1" fill="#D8A8FF"/><rect x="14" y="5" width="1" height="1" fill="#2040F0"/><rect x="15" y="5" width="1" height="1" fill="#000000"/><rect x="1" y="6" width="1" height="1" fill="#000000"/><rect x="2" y="6" width="3" height="1" fill="#2040F0"/><rect x="5" y="6" width="2" height="1" fill="#00F000"/><rect x="7" y="6" width="1" height="1" fill="#2040F0"/><rect x="8" y="6" width="4" height="1" fill="#FFFFFF"/><rect x="12" y="6" width="1" height="1" fill="#D8A8FF"/><rect x="13" y="6" width="3" height="1" fill="#2040F0"/><rect x="16" y="6" width="1" height="1" fill="#000000"/><rect x="1" y="7" width="1" height="1" fill="#000000"/><rect x="2" y="7" width="3" height="1" fill="#2040F0"/><rect x="5" y="7" width="1" height="1" fill="#00F000"/><rect x="6" y="7" width="2" height="1" fill="#2040F0"/><rect x="8" y="7" width="5" height="1" fill="#FFFFFF"/><rect x="13" y="7" width="1" height="1" fill="#D8A8FF"/><rect x="14" y="7" width="2" height="1" fill="#2040F0"/><rect x="16" y="7" width="1" height="1" fill="#000000"/><rect x="1" y="8" width="1" height="1" fill="#000000"/><rect x="2" y="8" width="3" height="1" fill="#2040F0"/><rect x="5" y="8" width="1" height="1" fill="#00F000"/><rect x="6" y="8" width="1" height="1" fill="#6090FF"/><rect x="7" y="8" width="1" height="1" fill="#2040F0"/><rect x="8" y="8" width="1" height="1" fill="#6090FF"/><rect x="9" y="8" width="3" height="1" fill="#FFFFFF"/><rect x="12" y="8" width="2" height="1" fill="#D8A8FF"/><rect x="14" y="8" width="2" height="1" fill="#2040F0"/><rect x="16" y="8" width="1" height="1" fill="#000000"/><rect x="1" y="9" width="1" height="1" fill="#000000"/><rect x="2" y="9" width="5" height="1" fill="#2040F0"/><rect x="7" y="9" width="2" height="1" fill="#6090FF"/><rect x="9" y="9" width="1" height="1" fill="#D8A8FF"/><rect x="10" y="9" width="1" height="1" fill="#FFFFFF"/><rect x="11" y="9" width="2" height="1" fill="#D8A8FF"/><rect x="13" y="9" width="3" height="1" fill="#2040F0"/><rect x="16" y="9" width="1" height="1" fill="#000000"/><rect x="1" y="10" width="1" height="1" fill="#000000"/><rect x="2" y="10" width="4" height="1" fill="#2040F0"/><rect x="6" y="10" width="4" height="1" fill="#6090FF"/><rect x="10" y="10" width="2" height="1" fill="#D8A8FF"/><rect x="12" y="10" width="4" height="1" fill="#2040F0"/><rect x="16" y="10" width="1" height="1" fill="#000000"/><rect x="2" y="11" width="1" height="1" fill="#000000"/><rect x="3" y="11" width="2" height="1" fill="#2040F0"/><rect x="5" y="11" width="3" height="1" fill="#6090FF"/><rect x="8" y="11" width="3" height="1" fill="#00F000"/><rect x="11" y="11" width="4" height="1" fill="#2040F0"/><rect x="15" y="11" width="1" height="1" fill="#000000"/><rect x="2" y="12" width="1" height="1" fill="#000000"/><rect x="3" y="12" width="3" height="1" fill="#2040F0"/><rect x="6" y="12" width="2" height="1" fill="#6090FF"/><rect x="8" y="12" width="5" height="1" fill="#00F000"/><rect x="13" y="12" width="2" height="1" fill="#2040F0"/><rect x="15" y="12" width="1" height="1" fill="#000000"/><rect x="3" y="13" width="1" height="1" fill="#000000"/><rect x="4" y="13" width="5" height="1" fill="#2040F0"/><rect x="9" y="13" width="4" height="1" fill="#00F000"/><rect x="13" y="13" width="1" height="1" fill="#2040F0"/><rect x="14" y="13" width="1" height="1" fill="#000000"/><rect x="4" y="14" width="2" height="1" fill="#000000"/><rect x="6" y="14" width="4" height="1" fill="#2040F0"/><rect x="10" y="14" width="2" height="1" fill="#00F000"/><rect x="12" y="14" width="2" height="1" fill="#000000"/><rect x="6" y="15" width="6" height="1" fill="#000000"/></svg>
<div class="a it" style="left:454px;top:241px;letter-spacing:0.2px">Web User</div>
<svg class="a" style="left:429px;top:265px" width="18" height="18" viewBox="0 0 18 18" shape-rendering="crispEdges"><g shape-rendering="geometricPrecision"><path d="M5.6 1.5H11.9L16.3 5.9V11.6L11.9 16H5.6L1.3 11.6V5.9Z" fill="#DDBE00" stroke="#3C3C3C" stroke-width="1.1"/><path d="M4.6 9.8V7.4Q4.6 5.8 6.4 5.8H10.6" fill="none" stroke="#00A000" stroke-width="3.6" stroke-linejoin="round"/><path d="M12.8 8V10.4Q12.8 12 11 12H6.8" fill="none" stroke="#00A000" stroke-width="3.6" stroke-linejoin="round"/><path d="M9.8 2.4L14.8 5.8L9.8 9.2Z" fill="#FFFFFF" stroke="#00A000" stroke-width="1" stroke-linejoin="round"/><path d="M7.6 8.6L2.6 12L7.6 15.4Z" fill="#FFFFFF" stroke="#00A000" stroke-width="1" stroke-linejoin="round"/><path d="M4.6 9.8V7.4Q4.6 5.8 6.4 5.8H10.6" fill="none" stroke="#FFFFFF" stroke-width="1.6"/><path d="M12.8 8V10.4Q12.8 12 11 12H6.8" fill="none" stroke="#FFFFFF" stroke-width="1.6"/></g></svg>
<div class="a it" style="left:454px;top:267px;letter-spacing:0.5px">Directory Sync</div>
<div class="a panel" style="left:22px;top:332px;width:590px;height:30px"></div>
<div class="a it" style="left:32px;top:340px;letter-spacing:0.57px">An individual question a user must answer in order to score calls</div>
<div class="a it" style="left:17px;top:379px;letter-spacing:0.64px">Enter a name for the object</div>
<div class="a it" style="left:148px;top:405px;letter-spacing:0.45px">Model</div>
<div class="a inp" style="left:217px;top:377px;width:392px;height:18px"></div>
<div class="a mono" style="left:221px;top:379px">Essex Magic Box</div>
<div class="a selb" style="left:217px;top:405px;width:117px;height:18px"></div>
<div class="a mono" style="left:222px;top:407px">PRI (ISDN-30)</div>
<svg class="a" style="left:320px;top:410px" width="10" height="10" viewBox="0 0 10 10"><path d="M1.5 3L5 6.5L8.5 3" fill="none" stroke="#000" stroke-width="1.4"/></svg>
<svg class="a" style="left:464px;top:419px" width="18" height="18" viewBox="0 0 18 18" shape-rendering="crispEdges"><g shape-rendering="geometricPrecision"><path d="M3.5 4.2H11.2A3.9 3.9 0 0 1 11.2 12H6" fill="none" stroke="#4AA444" stroke-width="4"/><path d="M1.8 12L6.6 7.2V16.8Z" fill="#4AA444"/><path d="M4.5 4.2H11.2A3.9 3.9 0 0 1 11.2 12H6" fill="none" stroke="#A8DCA0" stroke-width="1.6"/><path d="M3.4 12L5.6 9.8V14.2Z" fill="#A8DCA0"/></g></svg>
<div class="a btn" style="left:492px;top:422px;letter-spacing:0.45px">Cancel</div>
<svg class="a" style="left:563px;top:419px" width="18" height="18" viewBox="0 0 18 18" shape-rendering="crispEdges"><rect x="1" y="1" width="16" height="1" fill="#3C6CC0"/><rect x="1" y="2" width="1" height="1" fill="#3C6CC0"/><rect x="2" y="2" width="2" height="1" fill="#88ACE8"/><rect x="4" y="2" width="10" height="1" fill="#F4F8FF"/><rect x="14" y="2" width="2" height="1" fill="#88ACE8"/><rect x="16" y="2" width="1" height="1" fill="#3C6CC0"/><rect x="1" y="3" width="1" height="1" fill="#3C6CC0"/><rect x="2" y="3" width="2" height="1" fill="#88ACE8"/><rect x="4" y="3" width="1" height="1" fill="#F4F8FF"/><rect x="5" y="3" width="8" height="1" fill="#5CB040"/><rect x="13" y="3" width="1" height="1" fill="#F4F8FF"/><rect x="14" y="3" width="2" height="1" fill="#88ACE8"/><rect x="16" y="3" width="1" height="1" fill="#3C6CC0"/><rect x="1" y="4" width="1" height="1" fill="#3C6CC0"/><rect x="2" y="4" width="2" height="1" fill="#88ACE8"/><rect x="4" y="4" width="10" height="1" fill="#F4F8FF"/><rect x="14" y="4" width="2" height="1" fill="#88ACE8"/><rect x="16" y="4" width="1" height="1" fill="#3C6CC0"/><rect x="1" y="5" width="1" height="1" fill="#3C6CC0"/><rect x="2" y="5" width="2" height="1" fill="#88ACE8"/><rect x="4" y="5" width="1" height="1" fill="#F4F8FF"/><rect x="5" y="5" width="8" height="1" fill="#5CB040"/><rect x="13" y="5" width="1" height="1" fill="#F4F8FF"/><rect x="14" y="5" width="2" height="1" fill="#88ACE8"/><rect x="16" y="5" width="1" height="1" fill="#3C6CC0"/><rect x="1" y="6" width="1" height="1" fill="#3C6CC0"/><rect x="2" y="6" width="2" height="1" fill="#88ACE8"/><rect x="4" y="6" width="10" height="1" fill="#F4F8FF"/><rect x="14" y="6" width="2" height="1" fill="#88ACE8"/><rect x="16" y="6" width="1" height="1" fill="#3C6CC0"/><rect x="1" y="7" width="1" height="1" fill="#3C6CC0"/><rect x="2" y="7" width="14" height="1" fill="#88ACE8"/><rect x="16" y="7" width="1" height="1" fill="#3C6CC0"/><rect x="1" y="8" width="1" height="1" fill="#3C6CC0"/><rect x="2" y="8" width="14" height="1" fill="#6C98E0"/><rect x="16" y="8" width="1" height="1" fill="#3C6CC0"/><rect x="1" y="9" width="1" height="1" fill="#3C6CC0"/><rect x="2" y="9" width="14" height="1" fill="#88ACE8"/><rect x="16" y="9" width="1" height="1" fill="#3C6CC0"/><rect x="1" y="10" width="1" height="1" fill="#3C6CC0"/><rect x="2" y="10" width="1" height="1" fill="#88ACE8"/><rect x="3" y="10" width="12" height="1" fill="#F4F8FF"/><rect x="15" y="10" width="1" height="1" fill="#88ACE8"/><rect x="16" y="10" width="1" height="1" fill="#3C6CC0"/><rect x="1" y="11" width="1" height="1" fill="#3C6CC0"/><rect x="2" y="11" width="1" height="1" fill="#88ACE8"/><rect x="3" y="11" width="2" height="1" fill="#F4F8FF"/><rect x="5" y="11" width="3" height="1" fill="#3C6CC0"/><rect x="8" y="11" width="2" height="1" fill="#F4F8FF"/><rect x="10" y="11" width="4" height="1" fill="#DCE4F4"/><rect x="14" y="11" width="1" height="1" fill="#F4F8FF"/><rect x="15" y="11" width="1" height="1" fill="#88ACE8"/><rect x="16" y="11" width="1" height="1" fill="#3C6CC0"/><rect x="1" y="12" width="1" height="1" fill="#3C6CC0"/><rect x="2" y="12" width="1" height="1" fill="#88ACE8"/><rect x="3" y="12" width="2" height="1" fill="#F4F8FF"/><rect x="5" y="12" width="3" height="1" fill="#3C6CC0"/><rect x="8" y="12" width="2" height="1" fill="#F4F8FF"/><rect x="10" y="12" width="4" height="1" fill="#DCE4F4"/><rect x="14" y="12" width="1" height="1" fill="#F4F8FF"/><rect x="15" y="12" width="1" height="1" fill="#88ACE8"/><rect x="16" y="12" width="1" height="1" fill="#3C6CC0"/><rect x="1" y="13" width="1" height="1" fill="#3C6CC0"/><rect x="2" y="13" width="1" height="1" fill="#88ACE8"/><rect x="3" y="13" width="2" height="1" fill="#F4F8FF"/><rect x="5" y="13" width="3" height="1" fill="#3C6CC0"/><rect x="8" y="13" width="2" height="1" fill="#F4F8FF"/><rect x="10" y="13" width="4" height="1" fill="#DCE4F4"/><rect x="14" y="13" width="1" height="1" fill="#F4F8FF"/><rect x="15" y="13" width="1" height="1" fill="#88ACE8"/><rect x="16" y="13" width="1" height="1" fill="#3C6CC0"/><rect x="1" y="14" width="1" height="1" fill="#3C6CC0"/><rect x="2" y="14" width="1" height="1" fill="#88ACE8"/><rect x="3" y="14" width="12" height="1" fill="#F4F8FF"/><rect x="15" y="14" width="1" height="1" fill="#88ACE8"/><rect x="16" y="14" width="1" height="1" fill="#3C6CC0"/><rect x="1" y="15" width="1" height="1" fill="#3C6CC0"/><rect x="2" y="15" width="1" height="1" fill="#88ACE8"/><rect x="3" y="15" width="12" height="1" fill="#F4F8FF"/><rect x="15" y="15" width="1" height="1" fill="#3C6CC0"/><rect x="1" y="16" width="14" height="1" fill="#3C6CC0"/></svg>
<div class="a btn" style="left:591px;top:422px;letter-spacing:0.3px">Add</div>
<div class="a" style="left:551px;top:407px;width:64px;height:30px;border:5px solid #EC1C24"></div>
</body></html>
